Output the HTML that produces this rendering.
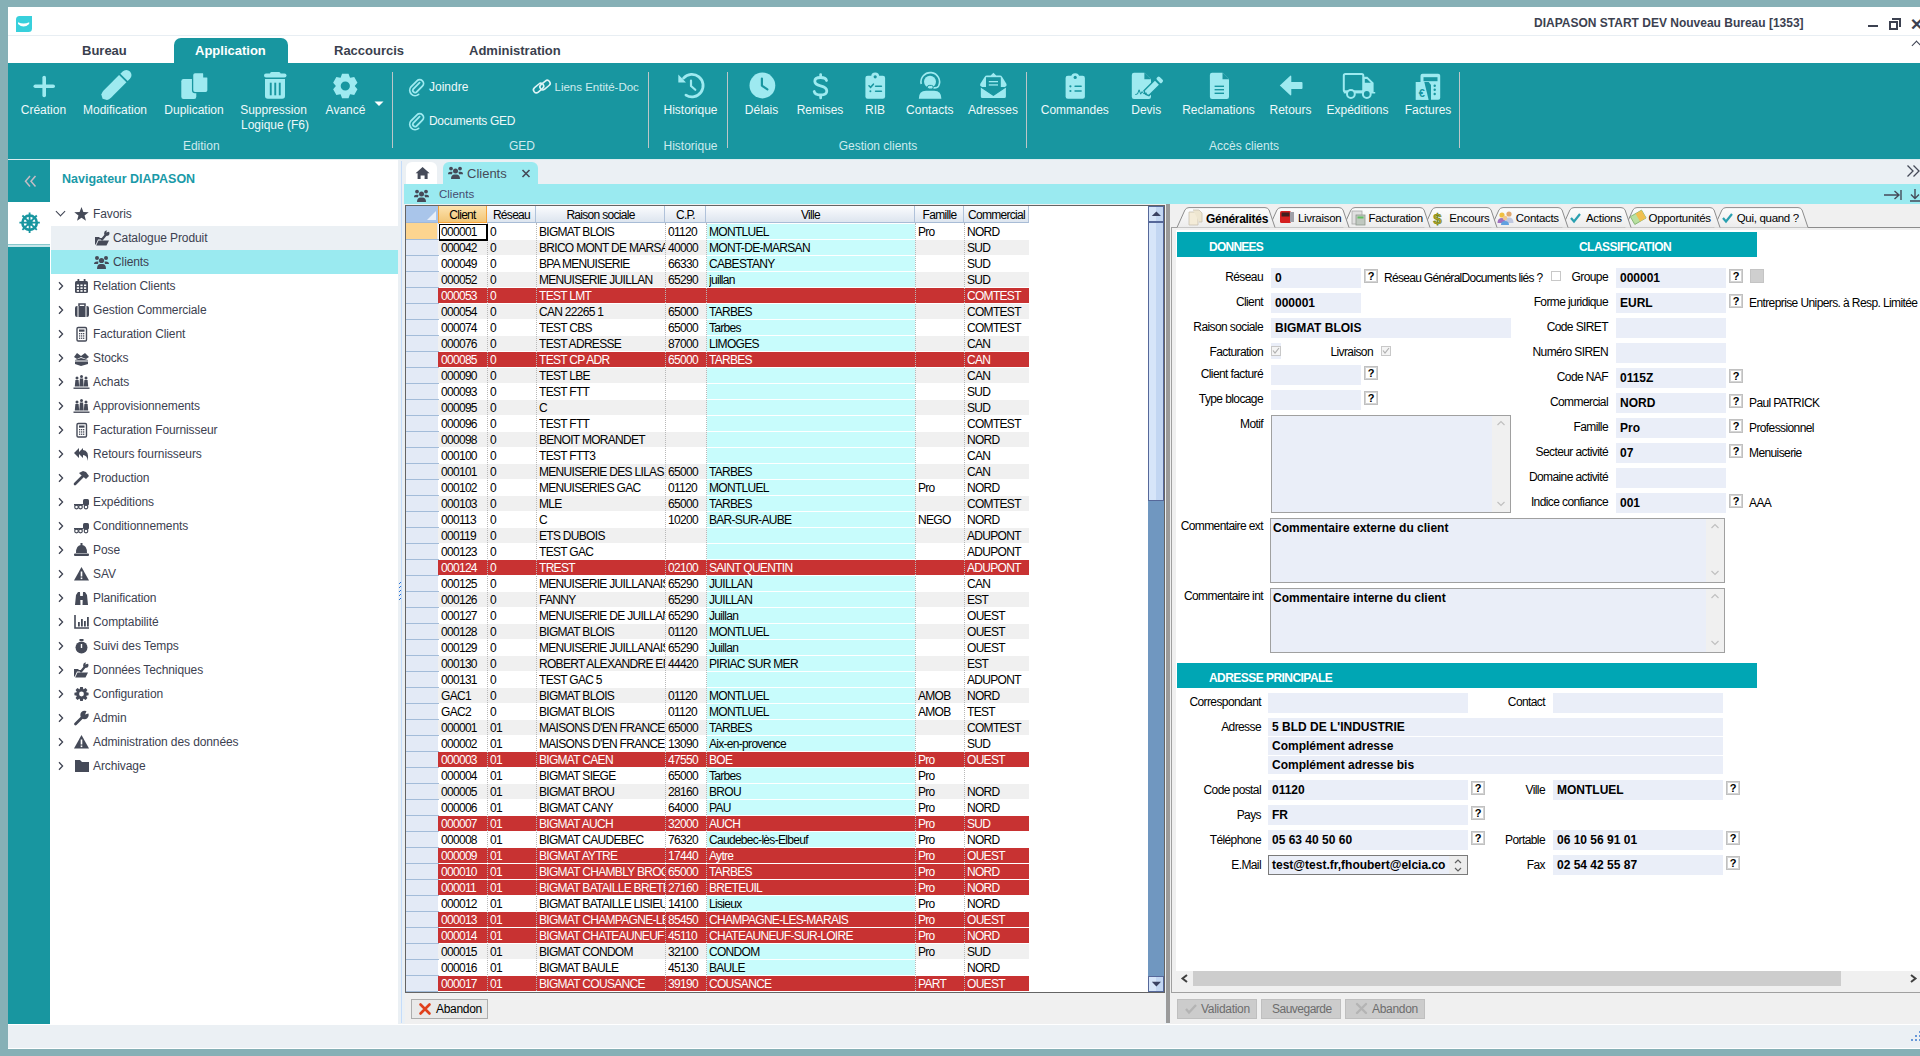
<!DOCTYPE html>
<html><head><meta charset="utf-8"><title>Diapason</title><style>
*{margin:0;padding:0;box-sizing:border-box}
html,body{width:1920px;height:1056px;overflow:hidden}
body{background:#86b0b6;font-family:"Liberation Sans",sans-serif;position:relative;color:#3c4150}
.a{position:absolute}
.nw{white-space:nowrap}
/* ribbon */
.rt{position:absolute;top:43px;font-size:13px;font-weight:bold;color:#3a3f4e;white-space:nowrap}
.rb{position:absolute;font-size:12.5px;color:#e6f6f8;white-space:nowrap;text-align:center}
.rg{position:absolute;top:139px;font-size:12.5px;color:#d4eef0;white-space:nowrap}
.sep{position:absolute;top:72px;width:1px;height:76px;background:#7cc4cc}
.ic{position:absolute;fill:#9eeaf0}
/* nav */
.ni{position:absolute;left:93px;font-size:12px;letter-spacing:-0.1px;color:#3c4150;white-space:nowrap;height:24px;line-height:24px}
.chev{position:absolute;left:56px;width:7px;height:7px;border-right:1.6px solid #3c4150;border-bottom:1.6px solid #3c4150;transform:rotate(-45deg)}
.nic{position:absolute;left:74px;fill:#454a58}
/* grid */
.g{position:absolute;font-size:12px;color:#000;white-space:nowrap;overflow:hidden;height:16px;line-height:16px;letter-spacing:-0.7px}
.gh{height:17px;line-height:17px}
/* detail */
.lb{position:absolute;font-size:12px;color:#000;white-space:nowrap;text-align:right;letter-spacing:-0.6px;margin-top:-1px}
.fd{position:absolute;background:#eaeef8;height:20px;font-size:12px;font-weight:bold;color:#000;line-height:20px;padding-left:4px;white-space:nowrap;overflow:hidden}
.q{position:absolute;width:14px;height:14px;border:1px solid #c0c0c0;box-shadow:inset 0 0 0 1px #d4d4d4;background:#fff;font-size:11px;font-weight:bold;line-height:12px;text-align:center;color:#000}
.hd{position:absolute;background:#00a6b4;color:#fff;font-weight:bold;font-size:12px;letter-spacing:0.5px}
</style></head><body>
<!-- window frame -->
<div class="a" style="left:8px;top:7px;width:1912px;height:1042px;background:#fff"></div>
<!-- title bar -->
<svg class="a" style="left:15px;top:15px" width="18" height="18" viewBox="15 15 18 18"><path d="M19.5,16 L32,16 L32,28.5 Q32,32 28.5,32 L16,32 L16,19.5 Q16,16 19.5,16 Z" fill="#38d0dc"/><path d="M18,22.3 Q23.6,24.8 29.2,22.3 L29.2,23.9 Q23.6,28.9 18,23.9 Z" fill="#fff"/></svg>
<div class="a" style="left:8px;top:35px;width:1912px;height:1px;background:#e8eef3"></div>
<div class="a nw" style="left:1534px;top:16px;font-size:12px;font-weight:bold;color:#3c4150">DIAPASON START DEV Nouveau Bureau [1353]</div>
<div class="a" style="left:1868px;top:25px;width:10px;height:2px;background:#3c4150"></div>
<div class="a" style="left:1889px;top:21px;width:9px;height:9px;border:2px solid #3c4150"></div>
<div class="a" style="left:1892px;top:18px;width:9px;height:9px;border-top:2px solid #3c4150;border-right:2px solid #3c4150"></div>
<div class="a nw" style="left:1910px;top:15px;font-size:16px;font-weight:bold;color:#3c4150">&#x2715;</div>
<div class="a" style="left:1913px;top:42px;width:7px;height:7px;border-left:1.5px solid #3c4150;border-top:1.5px solid #3c4150;transform:rotate(45deg)"></div>
<!-- ribbon tabs -->
<div class="rt" style="left:82px">Bureau</div>
<div class="a" style="left:174px;top:38px;width:114px;height:26px;background:#1896a0;border-radius:7px 7px 0 0"></div>
<div class="rt" style="left:195px;color:#fff">Application</div>
<div class="rt" style="left:334px">Raccourcis</div>
<div class="rt" style="left:469px">Administration</div>
<!-- ribbon body -->
<div class="a" style="left:8px;top:63px;width:1912px;height:96px;background:#1896a0"></div>
<svg class="a" style="left:0;top:0" width="1920" height="160" viewBox="0 0 1920 160">
<g fill="#9eeaf0" stroke="none">
<!-- plus -->
<rect x="42.4" y="75.8" width="3.6" height="21.4" rx="1.8"/>
<rect x="33.5" y="84.5" width="21.5" height="3.6" rx="1.8"/>
<!-- pencil -->
<g transform="translate(102.6,98.8) rotate(-45)"><path d="M0,0 L2.2,-4 Q4,-5.2 7,-5.2 L28.5,-5.2 L28.5,5.2 L7,5.2 Q4,5.2 2.2,4 Z"/><path d="M30.3,-5.2 L33.5,-5.2 A5.2,5.2 0 0 1 33.5,5.2 L30.3,5.2 Z"/></g>
<!-- copy -->
<rect x="181.3" y="79" width="15" height="20" rx="2.2"/>
<path d="M195,72.6 L203.2,72.6 L208,77.4 L208,90.2 Q208,92.6 205.6,92.6 L195,92.6 Q192.6,92.6 192.6,90.2 L192.6,75 Q192.6,72.6 195,72.6 Z" stroke="#1896a0" stroke-width="1.3"/>
<path d="M203.2,72.6 L203.2,77.4 L208,77.4 Z" fill="#1896a0"/>
<!-- trash -->
<rect x="264" y="73.4" width="22.5" height="4.2" rx="2"/>
<rect x="270" y="72" width="10.5" height="3" rx="1.5"/>
<path d="M265,79 L285,79 L285,96 Q285,98.8 282.2,98.8 L267.8,98.8 Q265,98.8 265,96 Z"/>
<g fill="#1896a0"><rect x="269.8" y="82.7" width="1.9" height="12.6"/><rect x="274.3" y="82.7" width="1.9" height="12.6"/><rect x="278.8" y="82.7" width="1.9" height="12.6"/></g>
<!-- gear -->
<path fill-rule="evenodd" d="M340.70,77.58 L342.06,73.82 L348.54,73.82 L349.90,77.58 L350.29,77.80 L354.23,77.11 L357.46,82.72 L354.90,85.77 L354.90,86.23 L357.46,89.28 L354.23,94.89 L350.29,94.20 L349.90,94.42 L348.54,98.18 L342.06,98.18 L340.70,94.42 L340.31,94.20 L336.37,94.89 L333.14,89.28 L335.70,86.23 L335.70,85.77 L333.14,82.72 L336.37,77.11 L340.31,77.80 Z M349.90,86.00 A4.6,4.6 0 1 0 340.70,86.00 A4.6,4.6 0 1 0 349.90,86.00 Z"/>
<!-- dropdown -->
<path d="M374.5,101.4 L383.5,101.4 L379,106 Z" fill="#ffffff"/>
<!-- history -->
<path d="M683.58,78.11 A11.2,11.2 0 1 1 685.96,95.10" fill="none" stroke="#9eeaf0" stroke-width="2.8" stroke-linecap="round"/>
<path d="M678.3,74.6 L678.3,82.2 Q678.3,82.4 678.5,82.4 L686,82.4 Z"/>
<path d="M691,80.6 L691,86 L695.3,89.8" fill="none" stroke="#9eeaf0" stroke-width="2.2" stroke-linecap="round" stroke-linejoin="round"/>
<!-- delais clock -->
<circle cx="762.4" cy="85.5" r="12.9"/>
<path d="M761.9,78.6 L761.9,85.7 L767.4,89.3" fill="none" stroke="#1896a0" stroke-width="2.2" stroke-linecap="round" stroke-linejoin="round"/>
<!-- dollar -->
<path d="M826.5,80.5 Q825.8,77.5 820.6,77.5 Q814.8,77.5 814.8,81.2 Q814.8,84.4 820.5,85.8 Q826.8,87.3 826.8,91 Q826.8,95 820.5,95 Q815,95 814.2,91.5" fill="none" stroke="#9eeaf0" stroke-width="2.8" stroke-linecap="round"/>
<rect x="819.3" y="73.3" width="2.7" height="5" rx="1.2"/><rect x="819.3" y="94" width="2.7" height="5.2" rx="1.2"/>
<!-- RIB clipboard check -->
<rect x="865.4" y="75.8" width="19.7" height="23" rx="2.2"/>
<circle cx="875.2" cy="76.6" r="4"/>
<circle cx="875.2" cy="76.8" r="1.6" fill="#1896a0"/>
<g fill="none" stroke="#1896a0" stroke-width="1.6" stroke-linecap="round"><path d="M869,85.8 L870.6,87.4 L873.4,84.2"/><path d="M875.6,86.2 L881.4,86.2"/><path d="M875.6,91.3 L881.4,91.3"/></g>
<circle cx="870.4" cy="91.3" r="1" fill="#1896a0"/>
<!-- contacts headset -->
<circle cx="930" cy="81.8" r="6"/>
<path d="M921.2,84 A9.3,9.3 0 1 1 938.6,86 Q937.6,88.2 933.2,87.8" fill="none" stroke="#9eeaf0" stroke-width="1.6"/>
<rect x="927.4" y="85.4" width="5.8" height="3.6" rx="1.8" stroke="#1896a0" stroke-width="1"/>
<path d="M918.8,98.7 Q918.8,90.7 926,90.7 L934.2,90.7 Q941.4,90.7 941.4,98.7 Z"/>
<!-- envelope open -->
<path d="M980.2,84 L984.6,77 Q985.4,75.6 987,75.6 L990.6,75.6 L993.4,72.8 L996.2,75.6 L999.8,75.6 Q1001.4,75.6 1002.2,77 L1006.5,84 L1006.5,87 L980.2,87 Z"/>
<rect x="986" y="77.2" width="14.8" height="12" fill="#1896a0"/>
<g fill="#9eeaf0"><rect x="988.8" y="81" width="9.2" height="1.3"/><rect x="988.8" y="84.3" width="9.2" height="1.3"/></g>
<path d="M980.2,86.6 L993.4,95.2 L1006.5,86.6 L1006.5,96.5 Q1006.5,98.7 1004.3,98.7 L982.4,98.7 Q980.2,98.7 980.2,96.5 Z" stroke="#1896a0" stroke-width="1.2"/>
<!-- commandes clipboard -->
<rect x="1065.6" y="75.8" width="19.3" height="23" rx="2.2"/>
<circle cx="1075.2" cy="77.2" r="4"/>
<circle cx="1075.2" cy="77.4" r="1.6" fill="#1896a0"/>
<g fill="#1896a0"><circle cx="1070.4" cy="86.3" r="1.1"/><circle cx="1070.4" cy="91" r="1.1"/><rect x="1074.3" y="85.5" width="7.6" height="1.6" rx=".8"/><rect x="1074.3" y="90.2" width="7.6" height="1.6" rx=".8"/></g>
<!-- devis -->
<path d="M1134,72.8 L1144.4,72.8 L1151,79.2 L1151,96.8 Q1151,99.1 1148.8,99.1 L1134,99.1 Q1131.8,99.1 1131.8,96.8 L1131.8,75 Q1131.8,72.8 1134,72.8 Z"/>
<path d="M1144.4,72.8 L1144.4,79.2 L1151,79.2 Z" fill="#1896a0"/>
<g transform="translate(1145.4,94.2) rotate(-45)"><path d="M0,0 L1.5,-3.5 L17,-3.5 L17,3.5 L1.5,3.5 Z" stroke="#1896a0" stroke-width="1.4"/><rect x="18.3" y="-3.5" width="4" height="7" rx="1.5"/></g>
<path d="M1135.3,94.5 L1137.5,94 L1139.1,89.8 L1140.7,94.2 L1142.1,91.6 L1143.5,93.6 L1147,93.2" fill="none" stroke="#1896a0" stroke-width="1"/>
<!-- reclamations -->
<path d="M1212,72.8 L1222.5,72.8 L1229,79.2 L1229,96.8 Q1229,99.1 1226.8,99.1 L1212,99.1 Q1209.9,99.1 1209.9,96.8 L1209.9,75 Q1209.9,72.8 1212,72.8 Z"/>
<path d="M1222.5,72.8 L1222.5,79.2 L1229,79.2 Z" fill="#1896a0"/>
<g fill="#1896a0"><rect x="1214.6" y="85.6" width="9.4" height="1.4"/><rect x="1214.6" y="89" width="9.4" height="1.4"/><rect x="1214.6" y="92.6" width="9.4" height="1.4"/></g>
<!-- retours arrow -->
<path d="M1279.8,85.5 L1290,75.9 Q1291.3,75 1291.3,76.8 L1291.3,82.1 L1301.6,82.1 Q1302.5,82.1 1302.5,83 L1302.5,88 Q1302.5,88.9 1301.6,88.9 L1291.3,88.9 L1291.3,94.2 Q1291.3,96 1290,95.1 Z"/>
<!-- truck -->
<rect x="1343.8" y="74.1" width="19.5" height="17.6" rx="1.6" fill="none" stroke="#9eeaf0" stroke-width="2"/>
<path d="M1362.8,76.8 L1367.4,76.8 L1373.6,82.8 L1373.6,92 L1375.2,92 L1375.2,93.6 L1362.8,93.6 Z"/>
<path d="M1364.8,79 L1367,79 L1370.8,82.8 L1364.8,82.8 Z" fill="#1896a0"/>
<rect x="1343.8" y="90.4" width="20" height="3" />
<circle cx="1350.9" cy="94" r="3.9" fill="#1896a0" stroke="#9eeaf0" stroke-width="2"/>
<circle cx="1366.8" cy="94" r="3.9" fill="#1896a0" stroke="#9eeaf0" stroke-width="2"/>
<!-- factures -->
<rect x="1420.5" y="73.8" width="19.7" height="26" rx="2"/>
<rect x="1423.5" y="77.2" width="14" height="4" fill="#1896a0"/>
<rect x="1415.7" y="82" width="13" height="17.9"/>
<path d="M1424.3,82 L1428.7,82 L1431,85 L1431,100 L1428.7,100" fill="#1896a0"/>
<g fill="#1896a0"><circle cx="1434.7" cy="85.8" r="1.2"/><circle cx="1434.7" cy="89.8" r="1.2"/><circle cx="1434.7" cy="94" r="1.2"/></g>
<text x="1421.8" y="97.4" font-family="Liberation Sans" font-size="11" font-weight="bold" fill="#1896a0" text-anchor="middle">&#8364;</text>
<!-- paperclips -->
<g fill="none" stroke="#9eeaf0" stroke-width="1.8" stroke-linecap="round">
<path d="M419.6,82.6 L413.2,89 A2.3,2.3 0 0 0 416.4,92.2 L422.4,86.2 A3.8,3.8 0 0 0 417,80.8 L411,86.8 A5.4,5.4 0 0 0 418.6,94.4"/>
<path d="M419.6,116.6 L413.2,123 A2.3,2.3 0 0 0 416.4,126.2 L422.4,120.2 A3.8,3.8 0 0 0 417,114.8 L411,120.8 A5.4,5.4 0 0 0 418.6,128.4"/>
</g>
<g fill="none" stroke="#dff4f6" stroke-width="1.6">
<rect x="532.8" y="85.2" width="11.5" height="5.8" rx="2.9" transform="rotate(-40 538.5 88)"/>
<rect x="539.2" y="82.2" width="11.5" height="5.8" rx="2.9" transform="rotate(-40 545 85)"/>
</g>
</g>
<!-- separators -->
<g fill="#bcc6c8"><rect x="392" y="72" width="1" height="76"/><rect x="648" y="72" width="1" height="76"/><rect x="727" y="72" width="1" height="76"/><rect x="1026" y="72" width="1" height="76"/><rect x="1459" y="72" width="1" height="76"/></g>
<g font-family="Liberation Sans" font-size="12" fill="#eef9fa" text-anchor="middle">
<text x="43.4" y="113.9">Création</text>
<text x="115" y="113.9">Modification</text>
<text x="194" y="113.9">Duplication</text>
<text x="273.5" y="113.9">Suppression</text>
<text x="275" y="128.9">Logique (F6)</text>
<text x="345.5" y="113.9">Avancé</text>
<text x="690.5" y="113.9">Historique</text>
<text x="761.5" y="113.9">Délais</text>
<text x="820" y="113.9">Remises</text>
<text x="875" y="113.9">RIB</text>
<text x="929.8" y="113.9">Contacts</text>
<text x="993" y="113.9">Adresses</text>
<text x="1074.8" y="113.9">Commandes</text>
<text x="1146.3" y="113.9">Devis</text>
<text x="1218.5" y="113.9">Reclamations</text>
<text x="1290.5" y="113.9">Retours</text>
<text x="1357.5" y="113.9">Expéditions</text>
<text x="1428" y="113.9">Factures</text>
</g>
<g font-family="Liberation Sans" font-size="12" fill="#cdebee" text-anchor="middle">
<text x="201.3" y="150">Edition</text>
<text x="522" y="150">GED</text>
<text x="690.5" y="150">Historique</text>
<text x="878" y="150">Gestion clients</text>
<text x="1244" y="150">Accès clients</text>
</g>
<g font-family="Liberation Sans" font-size="12" fill="#eef9fa">
<text x="429" y="91">Joindre</text>
<text x="429" y="125" letter-spacing="-0.3">Documents GED</text>
<text x="554.5" y="91" fill="#d0ecee" font-size="11.5">Liens Entité-Doc</text>
</g>
</svg>
<!-- sidebar -->
<div class="a" style="left:8px;top:159px;width:1912px;height:1px;background:#dcecef"></div>
<div class="a" style="left:8px;top:160px;width:42px;height:864px;background:#1896a0"></div>
<div class="a" style="left:8px;top:202px;width:42px;height:42px;background:#fff"></div>
<div class="a" style="left:8px;top:244px;width:42px;height:1px;background:#88c8cc"></div><div class="a" style="left:8px;top:245px;width:42px;height:2px;background:#c6e6ea"></div>
<svg class="a" style="left:0;top:160px" width="50" height="90" viewBox="0 160 50 90">
<path d="M30,176 L25.5,181.3 L30,186.6 M35.5,176 L31,181.3 L35.5,186.6" fill="none" stroke="#c4bcc4" stroke-width="1.5"/>
<g fill="none" stroke="#1896a0"><circle cx="29.6" cy="222.7" r="7.2" stroke-width="2.6"/><circle cx="29.6" cy="222.7" r="2.2" stroke-width="1.8"/>
<path d="M29.6,212.5 V232.9 M19.4,222.7 H39.8 M22.4,215.5 L36.8,229.9 M36.8,215.5 L22.4,229.9" stroke-width="1.8"/></g>
</svg>
<!-- nav panel -->
<div class="a" style="left:50px;top:160px;width:348px;height:864px;background:#fff"></div>
<div class="a nw" style="left:62px;top:172px;font-size:12.5px;font-weight:bold;color:#1a9aa8">Navigateur DIAPASON</div>
<div class="a" style="left:51px;top:226px;width:347px;height:24px;background:#ebf0f4"></div>
<div class="a" style="left:51px;top:250px;width:347px;height:24px;background:#9aeaf0"></div>
<div class="a" style="left:57px;top:208px;width:7px;height:7px;border-right:1.6px solid #3c4150;border-bottom:1.6px solid #3c4150;transform:rotate(45deg)"></div>
<div class="ni" style="top:202px">Favoris</div>
<div class="ni" style="top:226px;left:113px">Catalogue Produit</div>
<div class="ni" style="top:250px;left:113px">Clients</div>
<div class="ni" style="top:274px">Relation Clients</div>
<div class="ni" style="top:298px">Gestion Commerciale</div>
<div class="ni" style="top:322px">Facturation Client</div>
<div class="ni" style="top:346px">Stocks</div>
<div class="ni" style="top:370px">Achats</div>
<div class="ni" style="top:394px">Approvisionnements</div>
<div class="ni" style="top:418px">Facturation Fournisseur</div>
<div class="ni" style="top:442px">Retours fournisseurs</div>
<div class="ni" style="top:466px">Production</div>
<div class="ni" style="top:490px">Expéditions</div>
<div class="ni" style="top:514px">Conditionnements</div>
<div class="ni" style="top:538px">Pose</div>
<div class="ni" style="top:562px">SAV</div>
<div class="ni" style="top:586px">Planification</div>
<div class="ni" style="top:610px">Comptabilité</div>
<div class="ni" style="top:634px">Suivi des Temps</div>
<div class="ni" style="top:658px">Données Techniques</div>
<div class="ni" style="top:682px">Configuration</div>
<div class="ni" style="top:706px">Admin</div>
<div class="ni" style="top:730px">Administration des données</div>
<div class="ni" style="top:754px">Archivage</div>
<svg class="a" style="left:0;top:0" width="400" height="800" viewBox="0 0 400 800"><g fill="none" stroke="#3c4150" stroke-width="1.25">
<path d="M59,282.2 L62.6,286 L59,289.8"/>
<path d="M59,306.2 L62.6,310 L59,313.8"/>
<path d="M59,330.2 L62.6,334 L59,337.8"/>
<path d="M59,354.2 L62.6,358 L59,361.8"/>
<path d="M59,378.2 L62.6,382 L59,385.8"/>
<path d="M59,402.2 L62.6,406 L59,409.8"/>
<path d="M59,426.2 L62.6,430 L59,433.8"/>
<path d="M59,450.2 L62.6,454 L59,457.8"/>
<path d="M59,474.2 L62.6,478 L59,481.8"/>
<path d="M59,498.2 L62.6,502 L59,505.8"/>
<path d="M59,522.2 L62.6,526 L59,529.8"/>
<path d="M59,546.2 L62.6,550 L59,553.8"/>
<path d="M59,570.2 L62.6,574 L59,577.8"/>
<path d="M59,594.2 L62.6,598 L59,601.8"/>
<path d="M59,618.2 L62.6,622 L59,625.8"/>
<path d="M59,642.2 L62.6,646 L59,649.8"/>
<path d="M59,666.2 L62.6,670 L59,673.8"/>
<path d="M59,690.2 L62.6,694 L59,697.8"/>
<path d="M59,714.2 L62.6,718 L59,721.8"/>
<path d="M59,738.2 L62.6,742 L59,745.8"/>
<path d="M59,762.2 L62.6,766 L59,769.8"/>
</g><g fill="#454a58">
<path d="M81.50,207.00 L83.38,212.01 L88.73,212.25 L84.54,215.59 L85.97,220.75 L81.50,217.80 L77.03,220.75 L78.46,215.59 L74.27,212.25 L79.62,212.01 Z"/>
<path d="M95,237 L99,237 L100,238 L103,238 L103,239.5 L98,239.5 L95.8,244.5 L95,244.5 Z"/><path d="M98.5,240.5 L109,240.5 L106.5,245.5 L96.2,245.5 Z"/><path d="M102,239.5 L106.5,234" stroke="#454a58" stroke-width="2.2" stroke-linecap="round"/><circle cx="106.8" cy="233.2" r="2.6"/><path d="M106.2,232.6 L107.4,229.4 L109.6,231.6 Z" fill="#ebf0f4"/>
<circle cx="97" cy="258" r="2"/><circle cx="106" cy="258" r="2"/><circle cx="101.5" cy="260.5" r="2.6"/><path d="M94,264 Q94,261.5 97,261.5 L98.5,261.5 L98,264 Z M109,264 Q109,261.5 106,261.5 L104.5,261.5 L105,264 Z"/><path d="M97,269 Q97,264 100.5,264 L102.5,264 Q106,264 106,269 Z"/>
<rect x="75" y="281" width="13" height="12" rx="1.5"/><rect x="77.5" y="279" width="1.8" height="3"/><rect x="83.7" y="279" width="1.8" height="3"/><rect x="76.8" y="284.5" width="2.2" height="1.6" fill="#fff"/><rect x="80.39999999999999" y="284.5" width="2.2" height="1.6" fill="#fff"/><rect x="84.0" y="284.5" width="2.2" height="1.6" fill="#fff"/><rect x="76.8" y="287.3" width="2.2" height="1.6" fill="#fff"/><rect x="80.39999999999999" y="287.3" width="2.2" height="1.6" fill="#fff"/><rect x="84.0" y="287.3" width="2.2" height="1.6" fill="#fff"/><rect x="76.8" y="290.1" width="2.2" height="1.6" fill="#fff"/><rect x="80.39999999999999" y="290.1" width="2.2" height="1.6" fill="#fff"/><rect x="84.0" y="290.1" width="2.2" height="1.6" fill="#fff"/>
<rect x="75" y="306" width="14" height="11" rx="2"/><path d="M79,306 L79,304 L85,304 L85,306" fill="none" stroke="#454a58" stroke-width="1.5"/><rect x="77.5" y="306" width="1" height="11" fill="#fff"/><rect x="85.5" y="306" width="1" height="11" fill="#fff"/>
<rect x="77" y="327.5" width="9.5" height="13.5" rx="1.2" fill="#fff" stroke="#454a58" stroke-width="1.4"/><rect x="79" y="329.5" width="5.5" height="2.2"/><rect x="79" y="333.0" width="1.3" height="1.3"/><rect x="81" y="333.0" width="1.3" height="1.3"/><rect x="83" y="333.0" width="1.3" height="1.3"/><rect x="79" y="335.3" width="1.3" height="1.3"/><rect x="81" y="335.3" width="1.3" height="1.3"/><rect x="83" y="335.3" width="1.3" height="1.3"/><rect x="79" y="337.6" width="1.3" height="1.3"/><rect x="81" y="337.6" width="1.3" height="1.3"/><rect x="83" y="337.6" width="1.3" height="1.3"/>
<path d="M74,357 L77,353 L81,356 L85,353 L89,357 L86,359 L81,357 L77,359 Z"/><path d="M75,360 L81,358 L88,360 L88,364 L81,366 L75,364 Z"/><path d="M75,361 L88,361" stroke="#fff" stroke-width="1"/>
<circle cx="77" cy="378" r="1.5"/><path d="M74.8,386.5 L75.4,380 L78.6,380 L79.2,386.5 Z"/><circle cx="81.5" cy="376.5" r="1.5"/><path d="M79.3,386.5 L79.9,378.5 L83.1,378.5 L83.7,386.5 Z"/><circle cx="86" cy="378" r="1.5"/><path d="M83.8,386.5 L84.4,380 L87.6,380 L88.2,386.5 Z"/><rect x="73.5" y="387.5" width="16" height="1.4"/>
<circle cx="77" cy="402" r="1.5"/><path d="M74.8,410.5 L75.4,404 L78.6,404 L79.2,410.5 Z"/><circle cx="81.5" cy="400.5" r="1.5"/><path d="M79.3,410.5 L79.9,402.5 L83.1,402.5 L83.7,410.5 Z"/><circle cx="86" cy="402" r="1.5"/><path d="M83.8,410.5 L84.4,404 L87.6,404 L88.2,410.5 Z"/><rect x="73.5" y="411.5" width="16" height="1.4"/>
<rect x="77" y="423.5" width="9.5" height="13.5" rx="1.2" fill="#fff" stroke="#454a58" stroke-width="1.4"/><rect x="79" y="425.5" width="5.5" height="2.2"/><rect x="79" y="429.0" width="1.3" height="1.3"/><rect x="81" y="429.0" width="1.3" height="1.3"/><rect x="83" y="429.0" width="1.3" height="1.3"/><rect x="79" y="431.3" width="1.3" height="1.3"/><rect x="81" y="431.3" width="1.3" height="1.3"/><rect x="83" y="431.3" width="1.3" height="1.3"/><rect x="79" y="433.6" width="1.3" height="1.3"/><rect x="81" y="433.6" width="1.3" height="1.3"/><rect x="83" y="433.6" width="1.3" height="1.3"/>
<path d="M79,448 L74,453 L79,458 Z M83,448 L78,453 L83,458 L83,455 Q87,455 88,461 Q89,450 83,450 Z"/>
<path d="M75,484 L83,476" stroke="#454a58" stroke-width="2.6" stroke-linecap="round"/><path d="M79,473 L83,471 L86,472 L89,476 L86,479 L81,475 Z"/>
<path d="M74,504 L83,504 L83,505.5 L74,505.5 Z"/><rect x="83" y="499" width="6" height="6.5" rx="1.5"/><circle cx="76.5" cy="507" r="1.8" fill="none" stroke="#454a58" stroke-width="1.2"/><circle cx="80.5" cy="507" r="1.8" fill="none" stroke="#454a58" stroke-width="1.2"/><circle cx="86" cy="507" r="1.8" fill="none" stroke="#454a58" stroke-width="1.2"/>
<path d="M74,528 L83,528 L83,529.5 L74,529.5 Z"/><rect x="83" y="523" width="6" height="6.5" rx="1.5"/><circle cx="76.5" cy="531" r="1.8" fill="none" stroke="#454a58" stroke-width="1.2"/><circle cx="80.5" cy="531" r="1.8" fill="none" stroke="#454a58" stroke-width="1.2"/><circle cx="86" cy="531" r="1.8" fill="none" stroke="#454a58" stroke-width="1.2"/>
<path d="M76,553 Q76,545 81.5,545 Q87,545 87,553 Z"/><rect x="74" y="553.5" width="15" height="2.5" rx="1"/><rect x="80.5" y="543" width="2" height="3"/>
<path d="M81.5,567 L89,580.5 L74,580.5 Z"/><rect x="80.7" y="571.5" width="1.6" height="5" fill="#fff"/><rect x="80.7" y="577.5" width="1.6" height="1.6" fill="#fff"/>
<path d="M75,605 L76,595 L78,592 L80,592 L80.5,605 Z M88,605 L87,595 L85,592 L83,592 L82.5,605 Z"/><rect x="80" y="596" width="3" height="4"/>
<path d="M75,615 L75,628 L89,628" fill="none" stroke="#454a58" stroke-width="1.6"/><rect x="78" y="622" width="1.8" height="4.5"/><rect x="81" y="619" width="1.8" height="7.5"/><rect x="84" y="621" width="1.8" height="5.5"/><rect x="87" y="617" width="1.8" height="9.5"/>
<circle cx="81.5" cy="647.5" r="6"/><rect x="79.5" y="639" width="4" height="2"/><rect x="80.8" y="644" width="1.4" height="4" fill="#fff"/>
<path d="M74,669 L78,669 L79,670 L82,670 L82,671.5 L77,671.5 L74.8,676.5 L74,676.5 Z"/><path d="M77.5,672.5 L88,672.5 L85.5,677.5 L75.2,677.5 Z"/><path d="M81,671.5 L85.5,666" stroke="#454a58" stroke-width="2.2" stroke-linecap="round"/><circle cx="85.8" cy="665.2" r="2.6"/><path d="M85.2,664.6 L86.4,661.4 L88.6,663.6 Z" fill="#ffffff"/>
<path fill-rule="evenodd" d="M86.37,692.17 L88.58,692.71 L88.58,695.29 L86.37,695.83 L86.24,696.15 L87.42,698.10 L85.60,699.92 L83.65,698.74 L83.33,698.87 L82.79,701.08 L80.21,701.08 L79.67,698.87 L79.35,698.74 L77.40,699.92 L75.58,698.10 L76.76,696.15 L76.63,695.83 L74.42,695.29 L74.42,692.71 L76.63,692.17 L76.76,691.85 L75.58,689.90 L77.40,688.08 L79.35,689.26 L79.67,689.13 L80.21,686.92 L82.79,686.92 L83.33,689.13 L83.65,689.26 L85.60,688.08 L87.42,689.90 L86.24,691.85 Z M83.9,694 A2.4,2.4 0 1 0 79.1,694 A2.4,2.4 0 1 0 83.9,694 Z"/>
<path d="M75.5,724 L83,716.5" stroke="#454a58" stroke-width="2.8" stroke-linecap="round"/><circle cx="84.5" cy="715" r="4.2"/><path d="M85,714.5 L87,710 L90,713 Z" fill="#fff"/>
<path d="M81.5,735 L89,748.5 L74,748.5 Z"/><rect x="80.7" y="739.5" width="1.6" height="5" fill="#fff"/><rect x="80.7" y="745.5" width="1.6" height="1.6" fill="#fff"/>
<path d="M75,760 L80,760 L82,762 L89,762 L89,772 L75,772 Z"/>
</g></svg><!-- center tab strip -->
<div class="a" style="left:398px;top:160px;width:1522px;height:864px;background:#ebf0f4"></div>
<div class="a" style="left:401px;top:161px;width:1px;height:862px;background:#c4dcfa"></div><svg class="a" style="left:398px;top:580px" width="4" height="24"><g fill="#2a72d8"><rect x="1" y="3" width="1" height="1"/><rect x="2" y="2" width="1" height="1"/><rect x="1" y="7" width="1" height="1"/><rect x="2" y="6" width="1" height="1"/><rect x="1" y="11" width="1" height="1"/><rect x="2" y="10" width="1" height="1"/><rect x="1" y="15" width="1" height="1"/><rect x="2" y="14" width="1" height="1"/><rect x="1" y="19" width="1" height="1"/><rect x="2" y="18" width="1" height="1"/></g></svg>
<div class="a" style="left:406px;top:162px;width:31px;height:22px;background:#fff;border-radius:6px 6px 0 0"></div>
<div class="a" style="left:443px;top:162px;width:95px;height:22px;background:#9aeaf0;border-radius:6px 6px 0 0"></div>
<div class="a nw" style="left:467px;top:166px;font-size:13px;color:#454a58">Clients</div>
<div class="a" style="left:404px;top:184px;width:1516px;height:20px;background:#9aeaf0"></div>
<div class="a nw" style="left:439px;top:188px;font-size:11.5px;color:#464c70">Clients</div>
<svg class="a" style="left:0;top:150px" width="1920" height="60" viewBox="0 150 1920 60">
<g fill="#454a58">
<path d="M422.6,167 L429.6,173.2 L427.6,173.2 L427.6,179 L424.6,179 L424.6,175.4 L420.6,175.4 L420.6,179 L417.6,179 L417.6,173.2 L415.6,173.2 Z"/>
<g transform="translate(448,166)"><circle cx="3" cy="2.6" r="1.9"/><circle cx="12" cy="2.6" r="1.9"/><circle cx="7.5" cy="5" r="2.5"/><path d="M0,8.2 Q0,5.8 2.6,5.8 L4.6,5.8 L4,8.2 Z M15,8.2 Q15,5.8 12.4,5.8 L10.4,5.8 L11,8.2 Z M3,13 Q3,8.4 6.5,8.4 L8.5,8.4 Q12,8.4 12,13 Z"/></g>
<g transform="translate(414,189)"><circle cx="3" cy="2.6" r="1.9"/><circle cx="12" cy="2.6" r="1.9"/><circle cx="7.5" cy="5" r="2.5"/><path d="M0,8.2 Q0,5.8 2.6,5.8 L4.6,5.8 L4,8.2 Z M15,8.2 Q15,5.8 12.4,5.8 L10.4,5.8 L11,8.2 Z M3,13 Q3,8.4 6.5,8.4 L8.5,8.4 Q12,8.4 12,13 Z"/></g>
</g>
<g fill="none" stroke="#454a58" stroke-width="1.6"><path d="M522.5,170 L529.5,177 M529.5,170 L522.5,177"/>
<path d="M1907.5,165.5 L1913,171 L1907.5,176.5 M1913.5,165.5 L1919,171 L1913.5,176.5" stroke-width="1.3"/>
<path d="M1884,195 L1899,195 M1894.5,191 L1899,195 L1894.5,199 M1901,190 L1901,200" stroke-width="1.4"/>
<path d="M1915,189 L1915,198 M1911,194.5 L1915,198.5 L1919,194.5 M1910,201 L1920,201" stroke-width="1.4"/></g>
</svg>
<!-- grid panel -->
<div class="a" style="left:405px;top:204px;width:760px;height:820px;background:#f0f0f0"></div>
<div class="a" style="left:405px;top:205px;width:760px;height:788px;background:#fff;border:1px solid #646464"></div>
<div class="a" style="left:406px;top:206px;width:32px;height:17px;background:#a9c5ea;border-bottom:1px solid #a0b8d8"></div>
<svg class="a" style="left:426px;top:210px" width="12" height="12"><path d="M10,1 L10,10 L1,10 Z" fill="#e8eef8"/></svg>
<div class="a" style="left:438px;top:206px;width:49px;height:17px;background:linear-gradient(#fde3b0,#f2c677);border-right:1px solid #f5a23a;border-bottom:1px solid #f5a23a;border-left:1px solid #f5a23a"></div>

<div class="a" style="left:406px;top:223px;width:33px;height:768px;background:#e3eaf6;border-right:1px solid #a3bcd9"></div><div class="a" style="left:406px;top:223px;width:31px;height:16px;background:#fcd590"></div><div class="a" style="left:406px;top:239px;width:32px;height:1px;background:#a3bcd9"></div><div class="a" style="left:406px;top:255px;width:32px;height:1px;background:#a3bcd9"></div><div class="a" style="left:406px;top:271px;width:32px;height:1px;background:#a3bcd9"></div><div class="a" style="left:406px;top:287px;width:32px;height:1px;background:#a3bcd9"></div><div class="a" style="left:406px;top:303px;width:32px;height:1px;background:#a3bcd9"></div><div class="a" style="left:406px;top:319px;width:32px;height:1px;background:#a3bcd9"></div><div class="a" style="left:406px;top:335px;width:32px;height:1px;background:#a3bcd9"></div><div class="a" style="left:406px;top:351px;width:32px;height:1px;background:#a3bcd9"></div><div class="a" style="left:406px;top:367px;width:32px;height:1px;background:#a3bcd9"></div><div class="a" style="left:406px;top:383px;width:32px;height:1px;background:#a3bcd9"></div><div class="a" style="left:406px;top:399px;width:32px;height:1px;background:#a3bcd9"></div><div class="a" style="left:406px;top:415px;width:32px;height:1px;background:#a3bcd9"></div><div class="a" style="left:406px;top:431px;width:32px;height:1px;background:#a3bcd9"></div><div class="a" style="left:406px;top:447px;width:32px;height:1px;background:#a3bcd9"></div><div class="a" style="left:406px;top:463px;width:32px;height:1px;background:#a3bcd9"></div><div class="a" style="left:406px;top:479px;width:32px;height:1px;background:#a3bcd9"></div><div class="a" style="left:406px;top:495px;width:32px;height:1px;background:#a3bcd9"></div><div class="a" style="left:406px;top:511px;width:32px;height:1px;background:#a3bcd9"></div><div class="a" style="left:406px;top:527px;width:32px;height:1px;background:#a3bcd9"></div><div class="a" style="left:406px;top:543px;width:32px;height:1px;background:#a3bcd9"></div><div class="a" style="left:406px;top:559px;width:32px;height:1px;background:#a3bcd9"></div><div class="a" style="left:406px;top:575px;width:32px;height:1px;background:#a3bcd9"></div><div class="a" style="left:406px;top:591px;width:32px;height:1px;background:#a3bcd9"></div><div class="a" style="left:406px;top:607px;width:32px;height:1px;background:#a3bcd9"></div><div class="a" style="left:406px;top:623px;width:32px;height:1px;background:#a3bcd9"></div><div class="a" style="left:406px;top:639px;width:32px;height:1px;background:#a3bcd9"></div><div class="a" style="left:406px;top:655px;width:32px;height:1px;background:#a3bcd9"></div><div class="a" style="left:406px;top:671px;width:32px;height:1px;background:#a3bcd9"></div><div class="a" style="left:406px;top:687px;width:32px;height:1px;background:#a3bcd9"></div><div class="a" style="left:406px;top:703px;width:32px;height:1px;background:#a3bcd9"></div><div class="a" style="left:406px;top:719px;width:32px;height:1px;background:#a3bcd9"></div><div class="a" style="left:406px;top:735px;width:32px;height:1px;background:#a3bcd9"></div><div class="a" style="left:406px;top:751px;width:32px;height:1px;background:#a3bcd9"></div><div class="a" style="left:406px;top:767px;width:32px;height:1px;background:#a3bcd9"></div><div class="a" style="left:406px;top:783px;width:32px;height:1px;background:#a3bcd9"></div><div class="a" style="left:406px;top:799px;width:32px;height:1px;background:#a3bcd9"></div><div class="a" style="left:406px;top:815px;width:32px;height:1px;background:#a3bcd9"></div><div class="a" style="left:406px;top:831px;width:32px;height:1px;background:#a3bcd9"></div><div class="a" style="left:406px;top:847px;width:32px;height:1px;background:#a3bcd9"></div><div class="a" style="left:406px;top:863px;width:32px;height:1px;background:#a3bcd9"></div><div class="a" style="left:406px;top:879px;width:32px;height:1px;background:#a3bcd9"></div><div class="a" style="left:406px;top:895px;width:32px;height:1px;background:#a3bcd9"></div><div class="a" style="left:406px;top:911px;width:32px;height:1px;background:#a3bcd9"></div><div class="a" style="left:406px;top:927px;width:32px;height:1px;background:#a3bcd9"></div><div class="a" style="left:406px;top:943px;width:32px;height:1px;background:#a3bcd9"></div><div class="a" style="left:406px;top:959px;width:32px;height:1px;background:#a3bcd9"></div><div class="a" style="left:406px;top:975px;width:32px;height:1px;background:#a3bcd9"></div><div class="a" style="left:406px;top:991px;width:32px;height:1px;background:#a3bcd9"></div>
<div class="a" style="left:487px;top:206px;width:49px;height:17px;background:linear-gradient(#fbfcfe,#dde5ef);border-right:1px solid #b0c2da;border-bottom:1px solid #a8bcd6"></div>
<div class="a" style="left:536px;top:206px;width:129px;height:17px;background:linear-gradient(#fbfcfe,#dde5ef);border-right:1px solid #b0c2da;border-bottom:1px solid #a8bcd6"></div>
<div class="a" style="left:665px;top:206px;width:41px;height:17px;background:linear-gradient(#fbfcfe,#dde5ef);border-right:1px solid #b0c2da;border-bottom:1px solid #a8bcd6"></div>
<div class="a" style="left:706px;top:206px;width:209px;height:17px;background:linear-gradient(#fbfcfe,#dde5ef);border-right:1px solid #b0c2da;border-bottom:1px solid #a8bcd6"></div>
<div class="a" style="left:915px;top:206px;width:49px;height:17px;background:linear-gradient(#fbfcfe,#dde5ef);border-right:1px solid #b0c2da;border-bottom:1px solid #a8bcd6"></div>
<div class="a" style="left:964px;top:206px;width:65px;height:17px;background:linear-gradient(#fbfcfe,#dde5ef);border-right:1px solid #b0c2da;border-bottom:1px solid #a8bcd6"></div>
<div class="a" style="left:1029px;top:206px;width:119px;height:17px;background:#fff"></div>
<div class="g gh" style="left:438px;top:207px;width:49px;text-align:center">Client</div>
<div class="g gh" style="left:487px;top:207px;width:49px;text-align:center">Réseau</div>
<div class="g gh" style="left:536px;top:207px;width:129px;text-align:center">Raison sociale</div>
<div class="g gh" style="left:665px;top:207px;width:41px;text-align:center">C.P.</div>
<div class="g gh" style="left:706px;top:207px;width:209px;text-align:center">Ville</div>
<div class="g gh" style="left:915px;top:207px;width:49px;text-align:center">Famille</div>
<div class="g gh" style="left:964px;top:207px;width:65px;text-align:center">Commercial</div>
<div class="a" style="left:438px;top:224px;width:591px;height:15px;background:#ffffff"></div>
<div class="a" style="left:707px;top:224px;width:208px;height:15px;background:#c8fcfc"></div>
<div class="g" style="left:441px;top:224px;width:46px;color:#000">000001</div>
<div class="g" style="left:490px;top:224px;width:46px;color:#000">0</div>
<div class="g" style="left:539px;top:224px;width:126px;color:#000">BIGMAT BLOIS</div>
<div class="g" style="left:668px;top:224px;width:38px;color:#000">01120</div>
<div class="g" style="left:709px;top:224px;width:206px;color:#000">MONTLUEL</div>
<div class="g" style="left:918px;top:224px;width:46px;color:#000">Pro</div>
<div class="g" style="left:967px;top:224px;width:62px;color:#000">NORD</div>
<div class="a" style="left:438px;top:240px;width:591px;height:15px;background:#f0f0f0"></div>
<div class="a" style="left:707px;top:240px;width:208px;height:15px;background:#c8fcfc"></div>
<div class="g" style="left:441px;top:240px;width:46px;color:#000">000042</div>
<div class="g" style="left:490px;top:240px;width:46px;color:#000">0</div>
<div class="g" style="left:539px;top:240px;width:126px;color:#000">BRICO MONT DE MARSAN</div>
<div class="g" style="left:668px;top:240px;width:38px;color:#000">40000</div>
<div class="g" style="left:709px;top:240px;width:206px;color:#000">MONT-DE-MARSAN</div>
<div class="g" style="left:967px;top:240px;width:62px;color:#000">SUD</div>
<div class="a" style="left:438px;top:256px;width:591px;height:15px;background:#ffffff"></div>
<div class="a" style="left:707px;top:256px;width:208px;height:15px;background:#c8fcfc"></div>
<div class="g" style="left:441px;top:256px;width:46px;color:#000">000049</div>
<div class="g" style="left:490px;top:256px;width:46px;color:#000">0</div>
<div class="g" style="left:539px;top:256px;width:126px;color:#000">BPA MENUISERIE</div>
<div class="g" style="left:668px;top:256px;width:38px;color:#000">66330</div>
<div class="g" style="left:709px;top:256px;width:206px;color:#000">CABESTANY</div>
<div class="g" style="left:967px;top:256px;width:62px;color:#000">SUD</div>
<div class="a" style="left:438px;top:272px;width:591px;height:15px;background:#f0f0f0"></div>
<div class="a" style="left:707px;top:272px;width:208px;height:15px;background:#c8fcfc"></div>
<div class="g" style="left:441px;top:272px;width:46px;color:#000">000052</div>
<div class="g" style="left:490px;top:272px;width:46px;color:#000">0</div>
<div class="g" style="left:539px;top:272px;width:126px;color:#000">MENUISERIE JUILLAN</div>
<div class="g" style="left:668px;top:272px;width:38px;color:#000">65290</div>
<div class="g" style="left:709px;top:272px;width:206px;color:#000">juillan</div>
<div class="g" style="left:967px;top:272px;width:62px;color:#000">SUD</div>
<div class="a" style="left:438px;top:288px;width:591px;height:15px;background:#c83232"></div>
<div class="g" style="left:441px;top:288px;width:46px;color:#fff">000053</div>
<div class="g" style="left:490px;top:288px;width:46px;color:#fff">0</div>
<div class="g" style="left:539px;top:288px;width:126px;color:#fff">TEST LMT</div>
<div class="g" style="left:967px;top:288px;width:62px;color:#fff">COMTEST</div>
<div class="a" style="left:438px;top:304px;width:591px;height:15px;background:#f0f0f0"></div>
<div class="a" style="left:707px;top:304px;width:208px;height:15px;background:#c8fcfc"></div>
<div class="g" style="left:441px;top:304px;width:46px;color:#000">000054</div>
<div class="g" style="left:490px;top:304px;width:46px;color:#000">0</div>
<div class="g" style="left:539px;top:304px;width:126px;color:#000">CAN 22265 1</div>
<div class="g" style="left:668px;top:304px;width:38px;color:#000">65000</div>
<div class="g" style="left:709px;top:304px;width:206px;color:#000">TARBES</div>
<div class="g" style="left:967px;top:304px;width:62px;color:#000">COMTEST</div>
<div class="a" style="left:438px;top:320px;width:591px;height:15px;background:#ffffff"></div>
<div class="a" style="left:707px;top:320px;width:208px;height:15px;background:#c8fcfc"></div>
<div class="g" style="left:441px;top:320px;width:46px;color:#000">000074</div>
<div class="g" style="left:490px;top:320px;width:46px;color:#000">0</div>
<div class="g" style="left:539px;top:320px;width:126px;color:#000">TEST CBS</div>
<div class="g" style="left:668px;top:320px;width:38px;color:#000">65000</div>
<div class="g" style="left:709px;top:320px;width:206px;color:#000">Tarbes</div>
<div class="g" style="left:967px;top:320px;width:62px;color:#000">COMTEST</div>
<div class="a" style="left:438px;top:336px;width:591px;height:15px;background:#f0f0f0"></div>
<div class="a" style="left:707px;top:336px;width:208px;height:15px;background:#c8fcfc"></div>
<div class="g" style="left:441px;top:336px;width:46px;color:#000">000076</div>
<div class="g" style="left:490px;top:336px;width:46px;color:#000">0</div>
<div class="g" style="left:539px;top:336px;width:126px;color:#000">TEST ADRESSE</div>
<div class="g" style="left:668px;top:336px;width:38px;color:#000">87000</div>
<div class="g" style="left:709px;top:336px;width:206px;color:#000">LIMOGES</div>
<div class="g" style="left:967px;top:336px;width:62px;color:#000">CAN</div>
<div class="a" style="left:438px;top:352px;width:591px;height:15px;background:#c83232"></div>
<div class="g" style="left:441px;top:352px;width:46px;color:#fff">000085</div>
<div class="g" style="left:490px;top:352px;width:46px;color:#fff">0</div>
<div class="g" style="left:539px;top:352px;width:126px;color:#fff">TEST CP ADR</div>
<div class="g" style="left:668px;top:352px;width:38px;color:#fff">65000</div>
<div class="g" style="left:709px;top:352px;width:206px;color:#fff">TARBES</div>
<div class="g" style="left:967px;top:352px;width:62px;color:#fff">CAN</div>
<div class="a" style="left:438px;top:368px;width:591px;height:15px;background:#f0f0f0"></div>
<div class="a" style="left:707px;top:368px;width:208px;height:15px;background:#c8fcfc"></div>
<div class="g" style="left:441px;top:368px;width:46px;color:#000">000090</div>
<div class="g" style="left:490px;top:368px;width:46px;color:#000">0</div>
<div class="g" style="left:539px;top:368px;width:126px;color:#000">TEST LBE</div>
<div class="g" style="left:967px;top:368px;width:62px;color:#000">CAN</div>
<div class="a" style="left:438px;top:384px;width:591px;height:15px;background:#ffffff"></div>
<div class="a" style="left:707px;top:384px;width:208px;height:15px;background:#c8fcfc"></div>
<div class="g" style="left:441px;top:384px;width:46px;color:#000">000093</div>
<div class="g" style="left:490px;top:384px;width:46px;color:#000">0</div>
<div class="g" style="left:539px;top:384px;width:126px;color:#000">TEST FTT</div>
<div class="g" style="left:967px;top:384px;width:62px;color:#000">SUD</div>
<div class="a" style="left:438px;top:400px;width:591px;height:15px;background:#f0f0f0"></div>
<div class="a" style="left:707px;top:400px;width:208px;height:15px;background:#c8fcfc"></div>
<div class="g" style="left:441px;top:400px;width:46px;color:#000">000095</div>
<div class="g" style="left:490px;top:400px;width:46px;color:#000">0</div>
<div class="g" style="left:539px;top:400px;width:126px;color:#000">C</div>
<div class="g" style="left:967px;top:400px;width:62px;color:#000">SUD</div>
<div class="a" style="left:438px;top:416px;width:591px;height:15px;background:#ffffff"></div>
<div class="a" style="left:707px;top:416px;width:208px;height:15px;background:#c8fcfc"></div>
<div class="g" style="left:441px;top:416px;width:46px;color:#000">000096</div>
<div class="g" style="left:490px;top:416px;width:46px;color:#000">0</div>
<div class="g" style="left:539px;top:416px;width:126px;color:#000">TEST FTT</div>
<div class="g" style="left:967px;top:416px;width:62px;color:#000">COMTEST</div>
<div class="a" style="left:438px;top:432px;width:591px;height:15px;background:#f0f0f0"></div>
<div class="a" style="left:707px;top:432px;width:208px;height:15px;background:#c8fcfc"></div>
<div class="g" style="left:441px;top:432px;width:46px;color:#000">000098</div>
<div class="g" style="left:490px;top:432px;width:46px;color:#000">0</div>
<div class="g" style="left:539px;top:432px;width:126px;color:#000">BENOIT MORANDET</div>
<div class="g" style="left:967px;top:432px;width:62px;color:#000">NORD</div>
<div class="a" style="left:438px;top:448px;width:591px;height:15px;background:#ffffff"></div>
<div class="a" style="left:707px;top:448px;width:208px;height:15px;background:#c8fcfc"></div>
<div class="g" style="left:441px;top:448px;width:46px;color:#000">000100</div>
<div class="g" style="left:490px;top:448px;width:46px;color:#000">0</div>
<div class="g" style="left:539px;top:448px;width:126px;color:#000">TEST FTT3</div>
<div class="g" style="left:967px;top:448px;width:62px;color:#000">CAN</div>
<div class="a" style="left:438px;top:464px;width:591px;height:15px;background:#f0f0f0"></div>
<div class="a" style="left:707px;top:464px;width:208px;height:15px;background:#c8fcfc"></div>
<div class="g" style="left:441px;top:464px;width:46px;color:#000">000101</div>
<div class="g" style="left:490px;top:464px;width:46px;color:#000">0</div>
<div class="g" style="left:539px;top:464px;width:126px;color:#000">MENUISERIE DES LILAS</div>
<div class="g" style="left:668px;top:464px;width:38px;color:#000">65000</div>
<div class="g" style="left:709px;top:464px;width:206px;color:#000">TARBES</div>
<div class="g" style="left:967px;top:464px;width:62px;color:#000">CAN</div>
<div class="a" style="left:438px;top:480px;width:591px;height:15px;background:#ffffff"></div>
<div class="a" style="left:707px;top:480px;width:208px;height:15px;background:#c8fcfc"></div>
<div class="g" style="left:441px;top:480px;width:46px;color:#000">000102</div>
<div class="g" style="left:490px;top:480px;width:46px;color:#000">0</div>
<div class="g" style="left:539px;top:480px;width:126px;color:#000">MENUISERIES GAC</div>
<div class="g" style="left:668px;top:480px;width:38px;color:#000">01120</div>
<div class="g" style="left:709px;top:480px;width:206px;color:#000">MONTLUEL</div>
<div class="g" style="left:918px;top:480px;width:46px;color:#000">Pro</div>
<div class="g" style="left:967px;top:480px;width:62px;color:#000">NORD</div>
<div class="a" style="left:438px;top:496px;width:591px;height:15px;background:#f0f0f0"></div>
<div class="a" style="left:707px;top:496px;width:208px;height:15px;background:#c8fcfc"></div>
<div class="g" style="left:441px;top:496px;width:46px;color:#000">000103</div>
<div class="g" style="left:490px;top:496px;width:46px;color:#000">0</div>
<div class="g" style="left:539px;top:496px;width:126px;color:#000">MLE</div>
<div class="g" style="left:668px;top:496px;width:38px;color:#000">65000</div>
<div class="g" style="left:709px;top:496px;width:206px;color:#000">TARBES</div>
<div class="g" style="left:967px;top:496px;width:62px;color:#000">COMTEST</div>
<div class="a" style="left:438px;top:512px;width:591px;height:15px;background:#ffffff"></div>
<div class="a" style="left:707px;top:512px;width:208px;height:15px;background:#c8fcfc"></div>
<div class="g" style="left:441px;top:512px;width:46px;color:#000">000113</div>
<div class="g" style="left:490px;top:512px;width:46px;color:#000">0</div>
<div class="g" style="left:539px;top:512px;width:126px;color:#000">C</div>
<div class="g" style="left:668px;top:512px;width:38px;color:#000">10200</div>
<div class="g" style="left:709px;top:512px;width:206px;color:#000">BAR-SUR-AUBE</div>
<div class="g" style="left:918px;top:512px;width:46px;color:#000">NEGO</div>
<div class="g" style="left:967px;top:512px;width:62px;color:#000">NORD</div>
<div class="a" style="left:438px;top:528px;width:591px;height:15px;background:#f0f0f0"></div>
<div class="a" style="left:707px;top:528px;width:208px;height:15px;background:#c8fcfc"></div>
<div class="g" style="left:441px;top:528px;width:46px;color:#000">000119</div>
<div class="g" style="left:490px;top:528px;width:46px;color:#000">0</div>
<div class="g" style="left:539px;top:528px;width:126px;color:#000">ETS DUBOIS</div>
<div class="g" style="left:967px;top:528px;width:62px;color:#000">ADUPONT</div>
<div class="a" style="left:438px;top:544px;width:591px;height:15px;background:#ffffff"></div>
<div class="a" style="left:707px;top:544px;width:208px;height:15px;background:#c8fcfc"></div>
<div class="g" style="left:441px;top:544px;width:46px;color:#000">000123</div>
<div class="g" style="left:490px;top:544px;width:46px;color:#000">0</div>
<div class="g" style="left:539px;top:544px;width:126px;color:#000">TEST GAC</div>
<div class="g" style="left:967px;top:544px;width:62px;color:#000">ADUPONT</div>
<div class="a" style="left:438px;top:560px;width:591px;height:15px;background:#c83232"></div>
<div class="g" style="left:441px;top:560px;width:46px;color:#fff">000124</div>
<div class="g" style="left:490px;top:560px;width:46px;color:#fff">0</div>
<div class="g" style="left:539px;top:560px;width:126px;color:#fff">TREST</div>
<div class="g" style="left:668px;top:560px;width:38px;color:#fff">02100</div>
<div class="g" style="left:709px;top:560px;width:206px;color:#fff">SAINT QUENTIN</div>
<div class="g" style="left:967px;top:560px;width:62px;color:#fff">ADUPONT</div>
<div class="a" style="left:438px;top:576px;width:591px;height:15px;background:#ffffff"></div>
<div class="a" style="left:707px;top:576px;width:208px;height:15px;background:#c8fcfc"></div>
<div class="g" style="left:441px;top:576px;width:46px;color:#000">000125</div>
<div class="g" style="left:490px;top:576px;width:46px;color:#000">0</div>
<div class="g" style="left:539px;top:576px;width:126px;color:#000">MENUISERIE JUILLANAISE</div>
<div class="g" style="left:668px;top:576px;width:38px;color:#000">65290</div>
<div class="g" style="left:709px;top:576px;width:206px;color:#000">JUILLAN</div>
<div class="g" style="left:967px;top:576px;width:62px;color:#000">CAN</div>
<div class="a" style="left:438px;top:592px;width:591px;height:15px;background:#f0f0f0"></div>
<div class="a" style="left:707px;top:592px;width:208px;height:15px;background:#c8fcfc"></div>
<div class="g" style="left:441px;top:592px;width:46px;color:#000">000126</div>
<div class="g" style="left:490px;top:592px;width:46px;color:#000">0</div>
<div class="g" style="left:539px;top:592px;width:126px;color:#000">FANNY</div>
<div class="g" style="left:668px;top:592px;width:38px;color:#000">65290</div>
<div class="g" style="left:709px;top:592px;width:206px;color:#000">JUILLAN</div>
<div class="g" style="left:967px;top:592px;width:62px;color:#000">EST</div>
<div class="a" style="left:438px;top:608px;width:591px;height:15px;background:#ffffff"></div>
<div class="a" style="left:707px;top:608px;width:208px;height:15px;background:#c8fcfc"></div>
<div class="g" style="left:441px;top:608px;width:46px;color:#000">000127</div>
<div class="g" style="left:490px;top:608px;width:46px;color:#000">0</div>
<div class="g" style="left:539px;top:608px;width:126px;color:#000">MENUISERIE DE JUILLAN</div>
<div class="g" style="left:668px;top:608px;width:38px;color:#000">65290</div>
<div class="g" style="left:709px;top:608px;width:206px;color:#000">Juillan</div>
<div class="g" style="left:967px;top:608px;width:62px;color:#000">OUEST</div>
<div class="a" style="left:438px;top:624px;width:591px;height:15px;background:#f0f0f0"></div>
<div class="a" style="left:707px;top:624px;width:208px;height:15px;background:#c8fcfc"></div>
<div class="g" style="left:441px;top:624px;width:46px;color:#000">000128</div>
<div class="g" style="left:490px;top:624px;width:46px;color:#000">0</div>
<div class="g" style="left:539px;top:624px;width:126px;color:#000">BIGMAT BLOIS</div>
<div class="g" style="left:668px;top:624px;width:38px;color:#000">01120</div>
<div class="g" style="left:709px;top:624px;width:206px;color:#000">MONTLUEL</div>
<div class="g" style="left:967px;top:624px;width:62px;color:#000">OUEST</div>
<div class="a" style="left:438px;top:640px;width:591px;height:15px;background:#ffffff"></div>
<div class="a" style="left:707px;top:640px;width:208px;height:15px;background:#c8fcfc"></div>
<div class="g" style="left:441px;top:640px;width:46px;color:#000">000129</div>
<div class="g" style="left:490px;top:640px;width:46px;color:#000">0</div>
<div class="g" style="left:539px;top:640px;width:126px;color:#000">MENUISERIE JUILLANAISE</div>
<div class="g" style="left:668px;top:640px;width:38px;color:#000">65290</div>
<div class="g" style="left:709px;top:640px;width:206px;color:#000">Juillan</div>
<div class="g" style="left:967px;top:640px;width:62px;color:#000">OUEST</div>
<div class="a" style="left:438px;top:656px;width:591px;height:15px;background:#f0f0f0"></div>
<div class="a" style="left:707px;top:656px;width:208px;height:15px;background:#c8fcfc"></div>
<div class="g" style="left:441px;top:656px;width:46px;color:#000">000130</div>
<div class="g" style="left:490px;top:656px;width:46px;color:#000">0</div>
<div class="g" style="left:539px;top:656px;width:126px;color:#000">ROBERT ALEXANDRE ENTREPRISE</div>
<div class="g" style="left:668px;top:656px;width:38px;color:#000">44420</div>
<div class="g" style="left:709px;top:656px;width:206px;color:#000">PIRIAC SUR MER</div>
<div class="g" style="left:967px;top:656px;width:62px;color:#000">EST</div>
<div class="a" style="left:438px;top:672px;width:591px;height:15px;background:#ffffff"></div>
<div class="a" style="left:707px;top:672px;width:208px;height:15px;background:#c8fcfc"></div>
<div class="g" style="left:441px;top:672px;width:46px;color:#000">000131</div>
<div class="g" style="left:490px;top:672px;width:46px;color:#000">0</div>
<div class="g" style="left:539px;top:672px;width:126px;color:#000">TEST GAC 5</div>
<div class="g" style="left:967px;top:672px;width:62px;color:#000">ADUPONT</div>
<div class="a" style="left:438px;top:688px;width:591px;height:15px;background:#f0f0f0"></div>
<div class="a" style="left:707px;top:688px;width:208px;height:15px;background:#c8fcfc"></div>
<div class="g" style="left:441px;top:688px;width:46px;color:#000">GAC1</div>
<div class="g" style="left:490px;top:688px;width:46px;color:#000">0</div>
<div class="g" style="left:539px;top:688px;width:126px;color:#000">BIGMAT BLOIS</div>
<div class="g" style="left:668px;top:688px;width:38px;color:#000">01120</div>
<div class="g" style="left:709px;top:688px;width:206px;color:#000">MONTLUEL</div>
<div class="g" style="left:918px;top:688px;width:46px;color:#000">AMOB</div>
<div class="g" style="left:967px;top:688px;width:62px;color:#000">NORD</div>
<div class="a" style="left:438px;top:704px;width:591px;height:15px;background:#ffffff"></div>
<div class="a" style="left:707px;top:704px;width:208px;height:15px;background:#c8fcfc"></div>
<div class="g" style="left:441px;top:704px;width:46px;color:#000">GAC2</div>
<div class="g" style="left:490px;top:704px;width:46px;color:#000">0</div>
<div class="g" style="left:539px;top:704px;width:126px;color:#000">BIGMAT BLOIS</div>
<div class="g" style="left:668px;top:704px;width:38px;color:#000">01120</div>
<div class="g" style="left:709px;top:704px;width:206px;color:#000">MONTLUEL</div>
<div class="g" style="left:918px;top:704px;width:46px;color:#000">AMOB</div>
<div class="g" style="left:967px;top:704px;width:62px;color:#000">TEST</div>
<div class="a" style="left:438px;top:720px;width:591px;height:15px;background:#f0f0f0"></div>
<div class="a" style="left:707px;top:720px;width:208px;height:15px;background:#c8fcfc"></div>
<div class="g" style="left:441px;top:720px;width:46px;color:#000">000001</div>
<div class="g" style="left:490px;top:720px;width:46px;color:#000">01</div>
<div class="g" style="left:539px;top:720px;width:126px;color:#000">MAISONS D'EN FRANCE</div>
<div class="g" style="left:668px;top:720px;width:38px;color:#000">65000</div>
<div class="g" style="left:709px;top:720px;width:206px;color:#000">TARBES</div>
<div class="g" style="left:967px;top:720px;width:62px;color:#000">COMTEST</div>
<div class="a" style="left:438px;top:736px;width:591px;height:15px;background:#ffffff"></div>
<div class="a" style="left:707px;top:736px;width:208px;height:15px;background:#c8fcfc"></div>
<div class="g" style="left:441px;top:736px;width:46px;color:#000">000002</div>
<div class="g" style="left:490px;top:736px;width:46px;color:#000">01</div>
<div class="g" style="left:539px;top:736px;width:126px;color:#000">MAISONS D'EN FRANCE</div>
<div class="g" style="left:668px;top:736px;width:38px;color:#000">13090</div>
<div class="g" style="left:709px;top:736px;width:206px;color:#000">Aix-en-provence</div>
<div class="g" style="left:967px;top:736px;width:62px;color:#000">SUD</div>
<div class="a" style="left:438px;top:752px;width:591px;height:15px;background:#c83232"></div>
<div class="g" style="left:441px;top:752px;width:46px;color:#fff">000003</div>
<div class="g" style="left:490px;top:752px;width:46px;color:#fff">01</div>
<div class="g" style="left:539px;top:752px;width:126px;color:#fff">BIGMAT CAEN</div>
<div class="g" style="left:668px;top:752px;width:38px;color:#fff">47550</div>
<div class="g" style="left:709px;top:752px;width:206px;color:#fff">BOE</div>
<div class="g" style="left:918px;top:752px;width:46px;color:#fff">Pro</div>
<div class="g" style="left:967px;top:752px;width:62px;color:#fff">OUEST</div>
<div class="a" style="left:438px;top:768px;width:591px;height:15px;background:#ffffff"></div>
<div class="a" style="left:707px;top:768px;width:208px;height:15px;background:#c8fcfc"></div>
<div class="g" style="left:441px;top:768px;width:46px;color:#000">000004</div>
<div class="g" style="left:490px;top:768px;width:46px;color:#000">01</div>
<div class="g" style="left:539px;top:768px;width:126px;color:#000">BIGMAT SIEGE</div>
<div class="g" style="left:668px;top:768px;width:38px;color:#000">65000</div>
<div class="g" style="left:709px;top:768px;width:206px;color:#000">Tarbes</div>
<div class="g" style="left:918px;top:768px;width:46px;color:#000">Pro</div>
<div class="a" style="left:438px;top:784px;width:591px;height:15px;background:#f0f0f0"></div>
<div class="a" style="left:707px;top:784px;width:208px;height:15px;background:#c8fcfc"></div>
<div class="g" style="left:441px;top:784px;width:46px;color:#000">000005</div>
<div class="g" style="left:490px;top:784px;width:46px;color:#000">01</div>
<div class="g" style="left:539px;top:784px;width:126px;color:#000">BIGMAT BROU</div>
<div class="g" style="left:668px;top:784px;width:38px;color:#000">28160</div>
<div class="g" style="left:709px;top:784px;width:206px;color:#000">BROU</div>
<div class="g" style="left:918px;top:784px;width:46px;color:#000">Pro</div>
<div class="g" style="left:967px;top:784px;width:62px;color:#000">NORD</div>
<div class="a" style="left:438px;top:800px;width:591px;height:15px;background:#ffffff"></div>
<div class="a" style="left:707px;top:800px;width:208px;height:15px;background:#c8fcfc"></div>
<div class="g" style="left:441px;top:800px;width:46px;color:#000">000006</div>
<div class="g" style="left:490px;top:800px;width:46px;color:#000">01</div>
<div class="g" style="left:539px;top:800px;width:126px;color:#000">BIGMAT CANY</div>
<div class="g" style="left:668px;top:800px;width:38px;color:#000">64000</div>
<div class="g" style="left:709px;top:800px;width:206px;color:#000">PAU</div>
<div class="g" style="left:918px;top:800px;width:46px;color:#000">Pro</div>
<div class="g" style="left:967px;top:800px;width:62px;color:#000">NORD</div>
<div class="a" style="left:438px;top:816px;width:591px;height:15px;background:#c83232"></div>
<div class="g" style="left:441px;top:816px;width:46px;color:#fff">000007</div>
<div class="g" style="left:490px;top:816px;width:46px;color:#fff">01</div>
<div class="g" style="left:539px;top:816px;width:126px;color:#fff">BIGMAT AUCH</div>
<div class="g" style="left:668px;top:816px;width:38px;color:#fff">32000</div>
<div class="g" style="left:709px;top:816px;width:206px;color:#fff">AUCH</div>
<div class="g" style="left:918px;top:816px;width:46px;color:#fff">Pro</div>
<div class="g" style="left:967px;top:816px;width:62px;color:#fff">SUD</div>
<div class="a" style="left:438px;top:832px;width:591px;height:15px;background:#ffffff"></div>
<div class="a" style="left:707px;top:832px;width:208px;height:15px;background:#c8fcfc"></div>
<div class="g" style="left:441px;top:832px;width:46px;color:#000">000008</div>
<div class="g" style="left:490px;top:832px;width:46px;color:#000">01</div>
<div class="g" style="left:539px;top:832px;width:126px;color:#000">BIGMAT CAUDEBEC</div>
<div class="g" style="left:668px;top:832px;width:38px;color:#000">76320</div>
<div class="g" style="left:709px;top:832px;width:206px;color:#000">Caudebec-lès-Elbeuf</div>
<div class="g" style="left:918px;top:832px;width:46px;color:#000">Pro</div>
<div class="g" style="left:967px;top:832px;width:62px;color:#000">NORD</div>
<div class="a" style="left:438px;top:848px;width:591px;height:15px;background:#c83232"></div>
<div class="g" style="left:441px;top:848px;width:46px;color:#fff">000009</div>
<div class="g" style="left:490px;top:848px;width:46px;color:#fff">01</div>
<div class="g" style="left:539px;top:848px;width:126px;color:#fff">BIGMAT AYTRE</div>
<div class="g" style="left:668px;top:848px;width:38px;color:#fff">17440</div>
<div class="g" style="left:709px;top:848px;width:206px;color:#fff">Aytre</div>
<div class="g" style="left:918px;top:848px;width:46px;color:#fff">Pro</div>
<div class="g" style="left:967px;top:848px;width:62px;color:#fff">OUEST</div>
<div class="a" style="left:438px;top:864px;width:591px;height:15px;background:#c83232"></div>
<div class="g" style="left:441px;top:864px;width:46px;color:#fff">000010</div>
<div class="g" style="left:490px;top:864px;width:46px;color:#fff">01</div>
<div class="g" style="left:539px;top:864px;width:126px;color:#fff">BIGMAT CHAMBLY BROCHON</div>
<div class="g" style="left:668px;top:864px;width:38px;color:#fff">65000</div>
<div class="g" style="left:709px;top:864px;width:206px;color:#fff">TARBES</div>
<div class="g" style="left:918px;top:864px;width:46px;color:#fff">Pro</div>
<div class="g" style="left:967px;top:864px;width:62px;color:#fff">NORD</div>
<div class="a" style="left:438px;top:880px;width:591px;height:15px;background:#c83232"></div>
<div class="g" style="left:441px;top:880px;width:46px;color:#fff">000011</div>
<div class="g" style="left:490px;top:880px;width:46px;color:#fff">01</div>
<div class="g" style="left:539px;top:880px;width:126px;color:#fff">BIGMAT BATAILLE BRETEUIL</div>
<div class="g" style="left:668px;top:880px;width:38px;color:#fff">27160</div>
<div class="g" style="left:709px;top:880px;width:206px;color:#fff">BRETEUIL</div>
<div class="g" style="left:918px;top:880px;width:46px;color:#fff">Pro</div>
<div class="g" style="left:967px;top:880px;width:62px;color:#fff">NORD</div>
<div class="a" style="left:438px;top:896px;width:591px;height:15px;background:#ffffff"></div>
<div class="a" style="left:707px;top:896px;width:208px;height:15px;background:#c8fcfc"></div>
<div class="g" style="left:441px;top:896px;width:46px;color:#000">000012</div>
<div class="g" style="left:490px;top:896px;width:46px;color:#000">01</div>
<div class="g" style="left:539px;top:896px;width:126px;color:#000">BIGMAT BATAILLE LISIEUX</div>
<div class="g" style="left:668px;top:896px;width:38px;color:#000">14100</div>
<div class="g" style="left:709px;top:896px;width:206px;color:#000">Lisieux</div>
<div class="g" style="left:918px;top:896px;width:46px;color:#000">Pro</div>
<div class="g" style="left:967px;top:896px;width:62px;color:#000">NORD</div>
<div class="a" style="left:438px;top:912px;width:591px;height:15px;background:#c83232"></div>
<div class="g" style="left:441px;top:912px;width:46px;color:#fff">000013</div>
<div class="g" style="left:490px;top:912px;width:46px;color:#fff">01</div>
<div class="g" style="left:539px;top:912px;width:126px;color:#fff">BIGMAT CHAMPAGNE-LES-MARAIS</div>
<div class="g" style="left:668px;top:912px;width:38px;color:#fff">85450</div>
<div class="g" style="left:709px;top:912px;width:206px;color:#fff">CHAMPAGNE-LES-MARAIS</div>
<div class="g" style="left:918px;top:912px;width:46px;color:#fff">Pro</div>
<div class="g" style="left:967px;top:912px;width:62px;color:#fff">OUEST</div>
<div class="a" style="left:438px;top:928px;width:591px;height:15px;background:#c83232"></div>
<div class="g" style="left:441px;top:928px;width:46px;color:#fff">000014</div>
<div class="g" style="left:490px;top:928px;width:46px;color:#fff">01</div>
<div class="g" style="left:539px;top:928px;width:126px;color:#fff">BIGMAT CHATEAUNEUF</div>
<div class="g" style="left:668px;top:928px;width:38px;color:#fff">45110</div>
<div class="g" style="left:709px;top:928px;width:206px;color:#fff">CHATEAUNEUF-SUR-LOIRE</div>
<div class="g" style="left:918px;top:928px;width:46px;color:#fff">Pro</div>
<div class="g" style="left:967px;top:928px;width:62px;color:#fff">NORD</div>
<div class="a" style="left:438px;top:944px;width:591px;height:15px;background:#f0f0f0"></div>
<div class="a" style="left:707px;top:944px;width:208px;height:15px;background:#c8fcfc"></div>
<div class="g" style="left:441px;top:944px;width:46px;color:#000">000015</div>
<div class="g" style="left:490px;top:944px;width:46px;color:#000">01</div>
<div class="g" style="left:539px;top:944px;width:126px;color:#000">BIGMAT CONDOM</div>
<div class="g" style="left:668px;top:944px;width:38px;color:#000">32100</div>
<div class="g" style="left:709px;top:944px;width:206px;color:#000">CONDOM</div>
<div class="g" style="left:918px;top:944px;width:46px;color:#000">Pro</div>
<div class="g" style="left:967px;top:944px;width:62px;color:#000">SUD</div>
<div class="a" style="left:438px;top:960px;width:591px;height:15px;background:#ffffff"></div>
<div class="a" style="left:707px;top:960px;width:208px;height:15px;background:#c8fcfc"></div>
<div class="g" style="left:441px;top:960px;width:46px;color:#000">000016</div>
<div class="g" style="left:490px;top:960px;width:46px;color:#000">01</div>
<div class="g" style="left:539px;top:960px;width:126px;color:#000">BIGMAT BAULE</div>
<div class="g" style="left:668px;top:960px;width:38px;color:#000">45130</div>
<div class="g" style="left:709px;top:960px;width:206px;color:#000">BAULE</div>
<div class="g" style="left:967px;top:960px;width:62px;color:#000">NORD</div>
<div class="a" style="left:438px;top:976px;width:591px;height:15px;background:#c83232"></div>
<div class="g" style="left:441px;top:976px;width:46px;color:#fff">000017</div>
<div class="g" style="left:490px;top:976px;width:46px;color:#fff">01</div>
<div class="g" style="left:539px;top:976px;width:126px;color:#fff">BIGMAT COUSANCE</div>
<div class="g" style="left:668px;top:976px;width:38px;color:#fff">39190</div>
<div class="g" style="left:709px;top:976px;width:206px;color:#fff">COUSANCE</div>
<div class="g" style="left:918px;top:976px;width:46px;color:#fff">PART</div>
<div class="g" style="left:967px;top:976px;width:62px;color:#fff">OUEST</div>
<div class="a" style="left:487px;top:223px;width:1px;height:768px;border-left:1px dotted #b8b8b8"></div>
<div class="a" style="left:536px;top:223px;width:1px;height:768px;border-left:1px dotted #b8b8b8"></div>
<div class="a" style="left:665px;top:223px;width:1px;height:768px;border-left:1px dotted #b8b8b8"></div>
<div class="a" style="left:706px;top:223px;width:1px;height:768px;border-left:1px dotted #b8b8b8"></div>
<div class="a" style="left:915px;top:223px;width:1px;height:768px;border-left:1px dotted #b8b8b8"></div>
<div class="a" style="left:964px;top:223px;width:1px;height:768px;border-left:1px dotted #b8b8b8"></div>
<div class="a" style="left:439px;top:224px;width:49px;height:17px;border:1px solid #000;border-right-width:2px;border-bottom-width:2px"></div>
<div class="a" style="left:1148px;top:206px;width:16px;height:786px;background:#7097c0"></div>
<div class="a" style="left:1148px;top:206px;width:16px;height:16px;background:linear-gradient(90deg,#d6e5f9 50%,#c2d6f2 50%);border:1px solid #56689a"></div>
<div class="a" style="left:1148px;top:222px;width:16px;height:279px;background:linear-gradient(90deg,#d6e5f9 50%,#c2d6f2 50%);border:1px solid #56689a"></div>
<div class="a" style="left:1148px;top:976px;width:16px;height:16px;background:linear-gradient(90deg,#d6e5f9 50%,#c2d6f2 50%);border:1px solid #56689a"></div>
<svg class="a" style="left:1148px;top:206px" width="16" height="786"><path d="M3.8,10 L13,10 L8.4,5.4 Z M3.8,775.8 L13,775.8 L8.4,780.6 Z" fill="#3a4262"/></svg>
<!-- grid bottom -->
<div class="a" style="left:411px;top:999px;width:77px;height:20px;background:#e9e9e9;border:1px solid #adadad"></div>
<svg class="a" style="left:418px;top:1002px" width="14" height="14"><path d="M2.5,2.5 L11.5,11.5 M11.5,2.5 L2.5,11.5" stroke="#e0401c" stroke-width="2.6" stroke-linecap="round"/></svg>
<div class="a nw" style="left:436px;top:1002px;font-size:12px;color:#000;letter-spacing:-0.3px">Abandon</div>
<!-- splitter between grid and detail -->
<div class="a" style="left:1166px;top:204px;width:4px;height:819px;background:#9a9a9a"></div>
<!-- detail panel -->
<div class="a" style="left:1170px;top:204px;width:750px;height:820px;background:#f0f0f0"></div>
<div class="a" style="left:1171px;top:227px;width:749px;height:766px;background:#f0f0f0;border-left:1px solid #a0a0a0;border-bottom:1px solid #a0a0a0"></div>
<div class="a" style="left:1176px;top:230px;width:744px;height:741px;background:#fff"></div>
<div class="a" style="left:1172px;top:227px;width:748px;height:1px;background:#a0a0a0"></div>

<svg class="a" style="left:1170px;top:204px" width="750" height="26" viewBox="1170 204 750 26">
<defs><linearGradient id="tg" x1="0" y1="0" x2="0" y2="1"><stop offset="0" stop-color="#fdfdfd"/><stop offset="1" stop-color="#ececec"/></linearGradient></defs>
<path d="M1714,227.5 L1722,209.8 Q1723.5,207.6 1726,207.6 L1798,207.6 Q1800.5,207.6 1802,209.8 L1808,227.5" fill="url(#tg)" stroke="#8c8c8c" stroke-width="1"/>
<path d="M1625,227.5 L1633,209.8 Q1634.5,207.6 1637,207.6 L1710,207.6 Q1712.5,207.6 1714,209.8 L1720,227.5" fill="url(#tg)" stroke="#8c8c8c" stroke-width="1"/>
<path d="M1562,227.5 L1570,209.8 Q1571.5,207.6 1574,207.6 L1621,207.6 Q1623.5,207.6 1625,209.8 L1631,227.5" fill="url(#tg)" stroke="#8c8c8c" stroke-width="1"/>
<path d="M1491,227.5 L1499,209.8 Q1500.5,207.6 1503,207.6 L1558,207.6 Q1560.5,207.6 1562,209.8 L1568,227.5" fill="url(#tg)" stroke="#8c8c8c" stroke-width="1"/>
<path d="M1424,227.5 L1432,209.8 Q1433.5,207.6 1436,207.6 L1487,207.6 Q1489.5,207.6 1491,209.8 L1497,227.5" fill="url(#tg)" stroke="#8c8c8c" stroke-width="1"/>
<path d="M1343,227.5 L1351,209.8 Q1352.5,207.6 1355,207.6 L1420,207.6 Q1422.5,207.6 1424,209.8 L1430,227.5" fill="url(#tg)" stroke="#8c8c8c" stroke-width="1"/>
<path d="M1269,227.5 L1277,209.8 Q1278.5,207.6 1281,207.6 L1339,207.6 Q1341.5,207.6 1343,209.8 L1349,227.5" fill="url(#tg)" stroke="#8c8c8c" stroke-width="1"/>
<path d="M1177,227.5 L1185,209.8 Q1186.5,207.6 1189,207.6 L1265,207.6 Q1267.5,207.6 1269,209.8 L1275,227.5" fill="url(#tg)" stroke="#8c8c8c" stroke-width="1"/>
<g>
<path d="M1189,212 L1195,212 L1198,215 L1198,225 L1189,225 Z" fill="#f4ecd8" stroke="#c8c0b0" stroke-width=".8"/>
<path d="M1193,210 L1199,210 L1202,213 L1202,222 L1199,222" fill="#eee6d0" stroke="#c8c0b0" stroke-width=".8"/>
<rect x="1280" y="211" width="11" height="12" rx="1.5" fill="#d42020"/><rect x="1281.5" y="212.5" width="8" height="4" fill="#402020"/><rect x="1290" y="212" width="4" height="10" fill="#a0a0a8"/>
<rect x="1352" y="211" width="10" height="13" fill="#e0e0e0" stroke="#a8a8a8" stroke-width=".8"/><rect x="1356" y="215" width="9" height="10" fill="#c0c8c0" stroke="#909890" stroke-width=".8"/><rect x="1357.5" y="216.5" width="6" height="2" fill="#60c060"/>
<text x="1437.5" y="224" font-family="Liberation Sans" font-size="15" font-weight="bold" fill="#c8a820" stroke="#608020" stroke-width=".6" text-anchor="middle">$</text>
<circle cx="1502" cy="215" r="2.6" fill="#f0c040"/><path d="M1497.5,223 Q1497.5,218 1502,218 Q1506.5,218 1506.5,223 Z" fill="#a070c0"/>
<circle cx="1509" cy="214" r="2.6" fill="#e0a870"/><path d="M1504.5,223 Q1504.5,217.5 1509,217.5 Q1513.5,217.5 1513.5,223 Z" fill="#c0c8e0"/>
<circle cx="1505" cy="218" r="2.3" fill="#f0c890"/><path d="M1501,225 Q1501,221 1505,221 Q1509,221 1509,225 Z" fill="#60a0e0"/>
<path d="M1571,218 L1574,221.5 L1580,214" fill="none" stroke="#2aa0b0" stroke-width="2.2"/>
<path d="M1723,218 L1726,221.5 L1732,214" fill="none" stroke="#2aa0b0" stroke-width="2.2"/>
<g transform="rotate(-30 1638 218)"><rect x="1632" y="213" width="13" height="9" fill="#b8e0a0" stroke="#80b070" stroke-width=".8"/><rect x="1638" y="213" width="7" height="9" fill="#f0c050"/></g>
</g>
</svg>
<div class="a nw" style="left:1206px;top:212px;font-size:12px;font-weight:bold;color:#000;letter-spacing:-0.3px">Généralités</div>
<div class="a nw" style="left:1298px;top:212px;font-size:11.5px;font-weight:normal;color:#000;letter-spacing:-0.3px">Livraison</div>
<div class="a nw" style="left:1368.5px;top:212px;font-size:11.5px;font-weight:normal;color:#000;letter-spacing:-0.3px">Facturation</div>
<div class="a nw" style="left:1449.3px;top:212px;font-size:11.5px;font-weight:normal;color:#000;letter-spacing:-0.3px">Encours</div>
<div class="a nw" style="left:1515.8px;top:212px;font-size:11.5px;font-weight:normal;color:#000;letter-spacing:-0.3px">Contacts</div>
<div class="a nw" style="left:1586px;top:212px;font-size:11.5px;font-weight:normal;color:#000;letter-spacing:-0.3px">Actions</div>
<div class="a nw" style="left:1648.5px;top:212px;font-size:11.5px;font-weight:normal;color:#000;letter-spacing:-0.3px">Opportunités</div>
<div class="a nw" style="left:1736.7px;top:212px;font-size:11.5px;font-weight:normal;color:#000;letter-spacing:-0.3px">Qui, quand ?</div>
<div class="a" style="left:1808px;top:227px;width:112px;height:1px;background:#8c8c8c"></div>
<div class="hd" style="left:1177px;top:232px;width:580px;height:25px"></div>
<div class="a nw" style="left:1209px;top:240px;font-size:12px;font-weight:bold;color:#fff;letter-spacing:-0.75px">DONNEES</div>
<div class="a nw" style="left:1579px;top:240px;font-size:12px;font-weight:bold;color:#fff;letter-spacing:-0.55px">CLASSIFICATION</div>
<div class="hd" style="left:1177px;top:663px;width:580px;height:25px"></div>
<div class="a nw" style="left:1209px;top:671px;font-size:12px;font-weight:bold;color:#fff;letter-spacing:-0.55px">ADRESSE PRINCIPALE</div>

<div class="lb" style="right:657px;top:271px">Réseau</div>
<div class="fd" style="left:1271px;top:268px;width:90px;height:20px;line-height:20px">0</div>
<div class="q" style="left:1364px;top:269px">?</div>
<div class="lb" style="right:657px;top:296px">Client</div>
<div class="fd" style="left:1271px;top:293px;width:90px;height:20px;line-height:20px">000001</div>
<div class="lb" style="right:657px;top:321px">Raison sociale</div>
<div class="fd" style="left:1271px;top:318px;width:240px;height:20px;line-height:20px">BIGMAT BLOIS</div>
<div class="a nw" style="left:1384px;top:271px;font-size:12px;color:#000;letter-spacing:-0.7px">Réseau GénéralDocuments liés ?</div>
<div class="a" style="left:1551px;top:271px;width:10px;height:10px;border:1px solid #c8c8c8;background:#fff"></div>
<div class="lb" style="right:657px;top:346px">Facturation</div>
<div class="a" style="left:1271px;top:343px;width:10px;height:16px;background:#eaeef8"></div><div class="a" style="left:1271px;top:346px;width:10px;height:10px;border:1px solid #c8c8c8;background:#f4f4f4"></div>
<div class="lb" style="right:547px;top:346px">Livraison</div>
<div class="a" style="left:1381px;top:346px;width:10px;height:10px;border:1px solid #c8c8c8;background:#f4f4f4"></div>
<svg class="a" style="left:1270px;top:344px" width="130" height="14"><path d="M3,6.5 L5,9 L9,4 M113,6.5 L115,9 L119,4" fill="none" stroke="#b0b0b0" stroke-width="1.2"/></svg>
<div class="lb" style="right:657px;top:368px">Client facturé</div>
<div class="fd" style="left:1271px;top:365px;width:90px;height:20px;line-height:20px"></div>
<div class="q" style="left:1364px;top:366px">?</div>
<div class="lb" style="right:657px;top:393px">Type blocage</div>
<div class="fd" style="left:1271px;top:390px;width:90px;height:20px;line-height:20px"></div>
<div class="q" style="left:1364px;top:391px">?</div>
<div class="lb" style="right:657px;top:418px">Motif</div>
<div class="a" style="left:1271px;top:415px;width:240px;height:98px;border:1px solid #a0a0a0;background:#eaeef8"></div><div class="a" style="left:1492px;top:416px;width:18px;height:96px;background:#f0f0f0"></div>
<svg class="a" style="left:1492px;top:416px" width="18" height="96"><path d="M5.5,9 L9,5.5 L12.5,9 M5.5,86 L9,89.5 L12.5,86" fill="none" stroke="#c0c0c0" stroke-width="1.2"/></svg>
<div class="lb" style="right:657px;top:520px">Commentaire ext</div>
<div class="a" style="left:1270px;top:518px;width:455px;height:65px;border:1px solid #a0a0a0;background:#eaeef8"></div><div class="a" style="left:1706px;top:519px;width:18px;height:63px;background:#f0f0f0"></div>
<div class="a nw" style="left:1273px;top:521px;font-size:12px;font-weight:bold;color:#000">Commentaire externe du client</div>
<div class="lb" style="right:657px;top:590px">Commentaire int</div>
<div class="a" style="left:1270px;top:588px;width:455px;height:65px;border:1px solid #a0a0a0;background:#eaeef8"></div><div class="a" style="left:1706px;top:589px;width:18px;height:63px;background:#f0f0f0"></div>
<div class="a nw" style="left:1273px;top:591px;font-size:12px;font-weight:bold;color:#000">Commentaire interne du client</div>
<svg class="a" style="left:1706px;top:519px" width="18" height="134"><path d="M5.5,9 L9,5.5 L12.5,9 M5.5,52 L9,55.5 L12.5,52 M5.5,79 L9,75.5 L12.5,79 M5.5,122 L9,125.5 L12.5,122" fill="none" stroke="#c0c0c0" stroke-width="1.2"/></svg>
<div class="lb" style="right:312px;top:271px">Groupe</div>
<div class="fd" style="left:1616px;top:268px;width:110px;height:20px;line-height:20px">000001</div>
<div class="q" style="left:1729px;top:269px">?</div>
<div class="lb" style="right:312px;top:296px">Forme juridique</div>
<div class="fd" style="left:1616px;top:293px;width:110px;height:20px;line-height:20px">EURL</div>
<div class="q" style="left:1729px;top:294px">?</div>
<div class="a nw" style="left:1749px;top:296px;font-size:12px;color:#000;letter-spacing:-0.6px">Entreprise Unipers. à Resp. Limitée</div>
<div class="lb" style="right:312px;top:321px">Code SIRET</div>
<div class="fd" style="left:1616px;top:318px;width:110px;height:20px;line-height:20px"></div>
<div class="lb" style="right:312px;top:346px">Numéro SIREN</div>
<div class="fd" style="left:1616px;top:343px;width:110px;height:20px;line-height:20px"></div>
<div class="lb" style="right:312px;top:371px">Code NAF</div>
<div class="fd" style="left:1616px;top:368px;width:110px;height:20px;line-height:20px">0115Z</div>
<div class="q" style="left:1729px;top:369px">?</div>
<div class="lb" style="right:312px;top:396px">Commercial</div>
<div class="fd" style="left:1616px;top:393px;width:110px;height:20px;line-height:20px">NORD</div>
<div class="q" style="left:1729px;top:394px">?</div>
<div class="a nw" style="left:1749px;top:396px;font-size:12px;color:#000;letter-spacing:-0.6px">Paul PATRICK</div>
<div class="lb" style="right:312px;top:421px">Famille</div>
<div class="fd" style="left:1616px;top:418px;width:110px;height:20px;line-height:20px">Pro</div>
<div class="q" style="left:1729px;top:419px">?</div>
<div class="a nw" style="left:1749px;top:421px;font-size:12px;color:#000;letter-spacing:-0.6px">Professionnel</div>
<div class="lb" style="right:312px;top:446px">Secteur activité</div>
<div class="fd" style="left:1616px;top:443px;width:110px;height:20px;line-height:20px">07</div>
<div class="q" style="left:1729px;top:444px">?</div>
<div class="a nw" style="left:1749px;top:446px;font-size:12px;color:#000;letter-spacing:-0.6px">Menuiserie</div>
<div class="lb" style="right:312px;top:471px">Domaine activité</div>
<div class="fd" style="left:1616px;top:468px;width:110px;height:20px;line-height:20px"></div>
<div class="lb" style="right:312px;top:496px">Indice confiance</div>
<div class="fd" style="left:1616px;top:493px;width:110px;height:20px;line-height:20px">001</div>
<div class="q" style="left:1729px;top:494px">?</div>
<div class="a nw" style="left:1749px;top:496px;font-size:12px;color:#000;letter-spacing:-0.6px">AAA</div>
<div class="a" style="left:1750px;top:269px;width:14px;height:14px;background:#cfcfcf;border:1px solid #c4c4c4"></div>
<div class="lb" style="right:659px;top:696px">Correspondant</div>
<div class="fd" style="left:1268px;top:693px;width:200px;height:20px;line-height:20px"></div>
<div class="lb" style="right:375px;top:696px">Contact</div>
<div class="fd" style="left:1553px;top:693px;width:170px;height:20px;line-height:20px"></div>
<div class="lb" style="right:659px;top:721px">Adresse</div>
<div class="fd" style="left:1268px;top:718px;width:455px;height:18px;line-height:18px">5 BLD DE L'INDUSTRIE</div>
<div class="fd" style="left:1268px;top:737px;width:455px;height:18px;line-height:18px">Complément adresse</div>
<div class="fd" style="left:1268px;top:756px;width:455px;height:18px;line-height:18px">Complément adresse bis</div>
<div class="lb" style="right:659px;top:784px">Code postal</div>
<div class="fd" style="left:1268px;top:780px;width:200px;height:20px;line-height:20px">01120</div>
<div class="q" style="left:1471px;top:781px">?</div>
<div class="lb" style="right:375px;top:784px">Ville</div>
<div class="fd" style="left:1553px;top:780px;width:170px;height:20px;line-height:20px">MONTLUEL</div>
<div class="q" style="left:1726px;top:781px">?</div>
<div class="lb" style="right:659px;top:809px">Pays</div>
<div class="fd" style="left:1268px;top:805px;width:200px;height:20px;line-height:20px">FR</div>
<div class="q" style="left:1471px;top:806px">?</div>
<div class="lb" style="right:659px;top:834px">Téléphone</div>
<div class="fd" style="left:1268px;top:830px;width:200px;height:20px;line-height:20px">05 63 40 50 60</div>
<div class="q" style="left:1471px;top:831px">?</div>
<div class="lb" style="right:375px;top:834px">Portable</div>
<div class="fd" style="left:1553px;top:830px;width:170px;height:20px;line-height:20px">06 10 56 91 01</div>
<div class="q" style="left:1726px;top:831px">?</div>
<div class="lb" style="right:659px;top:859px">E.Mail</div>
<div class="fd" style="left:1268px;top:855px;width:200px;height:20px;border:1px solid #7a7a7a;line-height:18px;padding-left:3px">test@test.fr,fhoubert@elcia.co</div>
<div class="a" style="left:1449px;top:856px;width:18px;height:18px;background:#ececec"></div><svg class="a" style="left:1449px;top:856px" width="18" height="18"><path d="M6,7 L9,4 L12,7 M6,12 L9,15 L12,12" fill="none" stroke="#606060" stroke-width="1.2"/></svg>
<div class="lb" style="right:375px;top:859px">Fax</div>
<div class="fd" style="left:1553px;top:855px;width:170px;height:20px;line-height:20px">02 54 42 55 87</div>
<div class="q" style="left:1726px;top:856px">?</div>
<div class="a" style="left:1172px;top:971px;width:748px;height:15px;background:#f0f0f0"></div>
<div class="a" style="left:1193px;top:971px;width:648px;height:15px;background:#cdcdcd"></div>
<svg class="a" style="left:1172px;top:971px" width="748" height="15"><path d="M15,4 L10.5,7.5 L15,11 M739,4 L743.5,7.5 L739,11" fill="none" stroke="#404040" stroke-width="2"/></svg>
<div class="a" style="left:1177px;top:999px;width:80px;height:20px;background:#cccccc;border:1px solid #bfbfbf"></div>
<div class="a" style="left:1261px;top:999px;width:80px;height:20px;background:#cccccc;border:1px solid #bfbfbf"></div>
<div class="a" style="left:1345px;top:999px;width:80px;height:20px;background:#cccccc;border:1px solid #bfbfbf"></div>
<svg class="a" style="left:1177px;top:999px" width="250" height="20"><path d="M9,10 L12,13.5 L19,6" fill="none" stroke="#b4b4b4" stroke-width="2.4"/><path d="M180,5 L189,14 M189,5 L180,14" stroke="#b4b4b4" stroke-width="2.4" stroke-linecap="round"/></svg>
<div class="a nw" style="left:1201px;top:1002px;font-size:12px;color:#6d6d6d;letter-spacing:-0.3px">Validation</div>
<div class="a nw" style="left:1272px;top:1002px;font-size:12px;color:#6d6d6d;letter-spacing:-0.5px">Sauvegarde</div>
<div class="a nw" style="left:1372px;top:1002px;font-size:12px;color:#6d6d6d;letter-spacing:-0.3px">Abandon</div>
<!-- status bar -->
<div class="a" style="left:8px;top:1024px;width:1912px;height:1px;background:#ffffff"></div>
<div class="a" style="left:8px;top:1025px;width:1912px;height:23px;background:#ebf0f4"></div>
<svg class="a" style="left:1900px;top:1026px" width="20" height="18"><g fill="#6898d8"><rect x="19" y="5" width="2" height="2"/><rect x="15" y="9" width="2" height="2"/><rect x="19" y="9" width="2" height="2"/><rect x="11" y="13" width="2" height="2"/><rect x="15" y="13" width="2" height="2"/><rect x="19" y="13" width="2" height="2"/></g></svg>
</body></html>
